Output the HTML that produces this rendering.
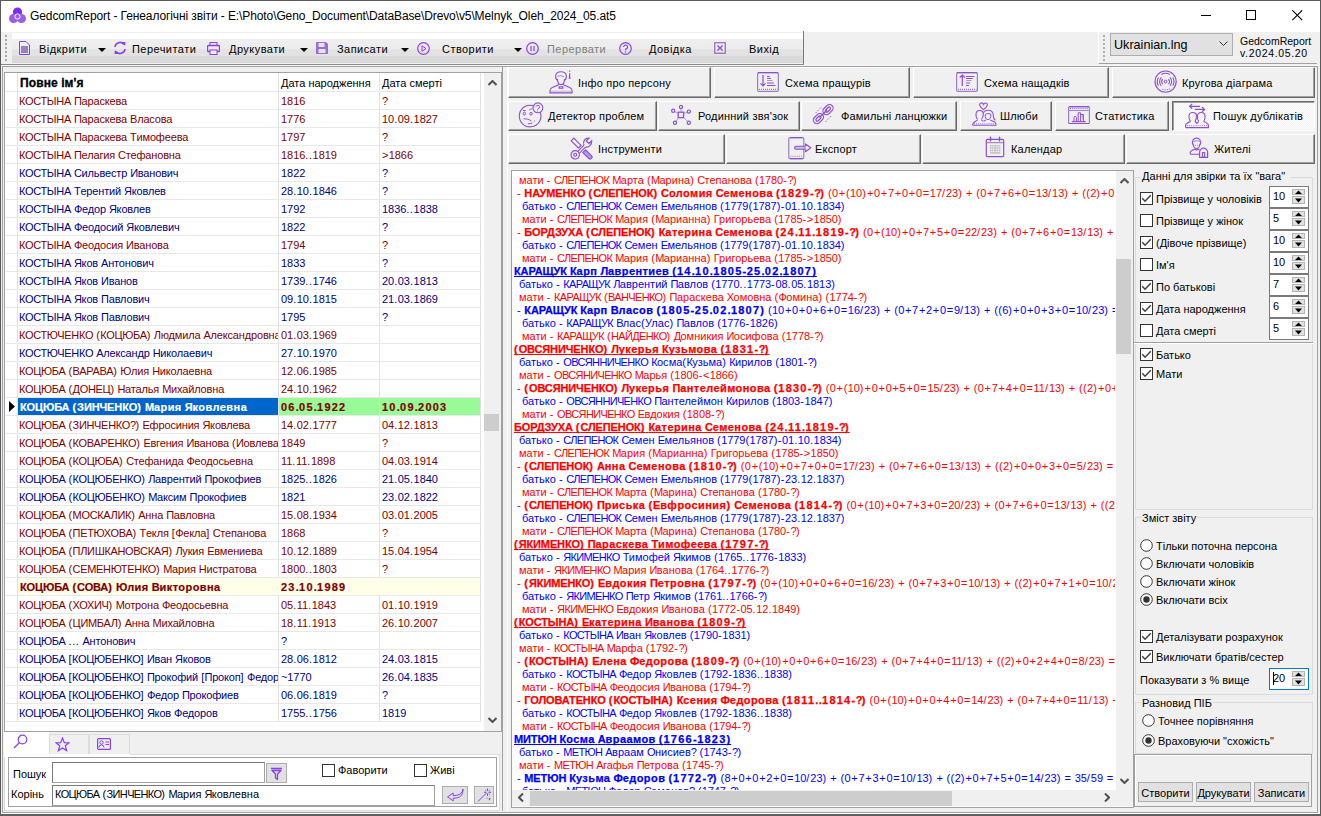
<!DOCTYPE html><html><head><meta charset="utf-8"><style>*{margin:0;padding:0}
html,body{width:1321px;height:816px;overflow:hidden;background:#f0f0f0}
body{position:relative;font-family:"Liberation Sans",sans-serif}
body div{position:absolute}
.t{white-space:pre}
.t span{position:static}
.t span span{}
</style></head><body><div style="left:0px;top:0px;width:1321px;height:816px;background:#f0f0f0"></div>
<div style="left:0px;top:0px;width:1321px;height:32px;background:#fff"></div>
<div style="left:0px;top:0px;width:1321px;height:1px;background:#5a5a5a"></div>
<div style="left:0px;top:0px;width:1px;height:816px;background:#5a5a5a"></div>
<div style="left:1320px;top:0px;width:1px;height:816px;background:#5a5a5a"></div>
<svg style="position:absolute;left:9px;top:7px" width="17" height="17" viewBox="0 0 17 17"><circle cx="8.5" cy="5" r="4.6" fill="#7a2ff0"/><circle cx="4.6" cy="11.5" r="4.6" fill="#9b5cf0"/><circle cx="12.4" cy="11.5" r="4.6" fill="#9b5cf0"/><circle cx="8.5" cy="9.5" r="2.6" fill="none" stroke="#fff" stroke-width="1"/></svg>
<div class="t" style="left:30px;top:9px;line-height:14px;font-size:12px;letter-spacing:-0.1px;color:#000">GedcomReport - Генеалогічні звіти - E:\Photo\Geno_Document\DataBase\Drevo\v5\Melnyk_Oleh_2024_05.at5</div>
<div style="left:1201px;top:15px;width:10px;height:1px;background:#000"></div>
<div style="left:1246px;top:10px;width:10px;height:10px;border:1px solid #000;box-sizing:border-box"></div>
<svg style="position:absolute;left:1292px;top:10px" width="11" height="11" viewBox="0 0 11 11"><path d="M0.3 0.3L10.2 10.2M10.2 0.3L0.3 10.2" stroke="#000" stroke-width="1.1"/></svg>
<div style="left:2px;top:32px;width:801px;height:32px;background:#f0f0f0"></div>
<div style="left:12px;top:33px;width:791px;height:6px;background:#fff"></div>
<div style="left:12px;top:39px;width:791px;height:24px;background:linear-gradient(#efefef 0%,#ececec 40%,#e3e3e3 45%,#e2e2e2 70%,#dadada 72%,#d9d9d9 100%)"></div>
<div style="left:803px;top:31px;width:1px;height:34px;background:#7a7a7a"></div>
<div style="left:5px;top:35px;width:2px;height:2px;background:#a8a8a8"></div>
<div style="left:5px;top:39px;width:2px;height:2px;background:#a8a8a8"></div>
<div style="left:5px;top:43px;width:2px;height:2px;background:#a8a8a8"></div>
<div style="left:5px;top:47px;width:2px;height:2px;background:#a8a8a8"></div>
<div style="left:5px;top:51px;width:2px;height:2px;background:#a8a8a8"></div>
<div style="left:5px;top:55px;width:2px;height:2px;background:#a8a8a8"></div>
<div style="left:5px;top:59px;width:2px;height:2px;background:#a8a8a8"></div>
<div style="left:1px;top:64px;width:803px;height:1px;background:#8a8a8a"></div>
<div style="left:1px;top:65px;width:1319px;height:1px;background:#f8f8f8"></div>
<div style="left:1098px;top:31px;width:219px;height:33px;background:#f0f0f0;border-top:1px solid #fff;border-left:1px solid #fff;border-bottom:1px solid #a0a0a0;box-sizing:border-box"></div>
<div style="left:1103px;top:35px;width:2px;height:2px;background:#b0b0b0"></div>
<div style="left:1103px;top:39px;width:2px;height:2px;background:#b0b0b0"></div>
<div style="left:1103px;top:43px;width:2px;height:2px;background:#b0b0b0"></div>
<div style="left:1103px;top:47px;width:2px;height:2px;background:#b0b0b0"></div>
<div style="left:1103px;top:51px;width:2px;height:2px;background:#b0b0b0"></div>
<div style="left:1103px;top:55px;width:2px;height:2px;background:#b0b0b0"></div>
<div style="left:1103px;top:59px;width:2px;height:2px;background:#b0b0b0"></div>
<div style="left:1110px;top:33px;width:123px;height:23px;background:#e1e1e1;border:1px solid #adadad;box-sizing:border-box"></div>
<div class="t" style="left:1114px;top:37px;line-height:16px;font-size:12.6px;color:#000">Ukrainian.lng</div>
<svg style="position:absolute;left:1219px;top:41px" width="10" height="6" viewBox="0 0 10 6"><path d="M0.5 0.5L4.5 4.5L8.5 0.5" fill="none" stroke="#333" stroke-width="1"/></svg>
<div class="t" style="left:1240px;top:35px;line-height:12px;font-size:10.5px;color:#000">GedcomReport</div>
<div class="t" style="left:1240px;top:47px;line-height:12px;font-size:10.5px;letter-spacing:0.65px;color:#000">v.2024.05.20</div>
<div class="t" style="left:39px;top:43px;line-height:13px;font-size:11px;letter-spacing:0.45px;color:#000">Відкрити</div>
<div class="t" style="left:132px;top:43px;line-height:13px;font-size:11px;letter-spacing:0.45px;color:#000">Перечитати</div>
<div class="t" style="left:229px;top:43px;line-height:13px;font-size:11px;letter-spacing:0.45px;color:#000">Друкувати</div>
<div class="t" style="left:337px;top:43px;line-height:13px;font-size:11px;letter-spacing:0.45px;color:#000">Записати</div>
<div class="t" style="left:442px;top:43px;line-height:13px;font-size:11px;letter-spacing:0.45px;color:#000">Створити</div>
<div class="t" style="left:547px;top:43px;line-height:13px;font-size:11px;letter-spacing:0.45px;color:#7f7f7f">Перервати</div>
<div class="t" style="left:649px;top:43px;line-height:13px;font-size:11px;letter-spacing:0.45px;color:#000">Довідка</div>
<div class="t" style="left:749px;top:43px;line-height:13px;font-size:11px;letter-spacing:0.45px;color:#000">Вихід</div>
<svg style="position:absolute;left:98px;top:48px" width="8" height="4" viewBox="0 0 8 4"><path d="M0 0H8L4 4Z" fill="#000"/></svg>
<svg style="position:absolute;left:300px;top:48px" width="8" height="4" viewBox="0 0 8 4"><path d="M0 0H8L4 4Z" fill="#000"/></svg>
<svg style="position:absolute;left:401px;top:48px" width="8" height="4" viewBox="0 0 8 4"><path d="M0 0H8L4 4Z" fill="#000"/></svg>
<svg style="position:absolute;left:514px;top:48px" width="8" height="4" viewBox="0 0 8 4"><path d="M0 0H8L4 4Z" fill="#000"/></svg>
<svg style="position:absolute;left:19px;top:41px" width="11" height="14" viewBox="0 0 11 14"><path d="M0.5 0.5H7L10.5 4V13.5H0.5Z" fill="none" stroke="#8a3ff0" stroke-width="1"/><rect x="2" y="5" width="7" height="7" fill="#9a7fc8"/></svg>
<svg style="position:absolute;left:113px;top:41px" width="14" height="14" viewBox="0 0 14 14"><path d="M2 6A5 5 0 0 1 11 3.5M12 8A5 5 0 0 1 3 10.5" fill="none" stroke="#8a3ff0" stroke-width="1.6"/><path d="M9 1L12.5 1L12 5Z M5 13L1.5 13L2 9Z" fill="#8a3ff0"/></svg>
<svg style="position:absolute;left:207px;top:42px" width="13" height="13" viewBox="0 0 13 13"><rect x="3" y="0.5" width="7" height="3" fill="none" stroke="#8a3ff0"/><rect x="0.5" y="3.5" width="12" height="6" rx="1" fill="none" stroke="#8a3ff0" stroke-width="1.4"/><rect x="3" y="8" width="7" height="4.5" fill="#f0f0f0" stroke="#8a3ff0"/></svg>
<svg style="position:absolute;left:316px;top:42px" width="12" height="12" viewBox="0 0 12 12"><path d="M0 0H10L12 2V12H0Z" fill="#9a6fd0"/><rect x="2.5" y="1" width="6" height="4" fill="#e8e0f5"/><rect x="2.5" y="7" width="7" height="4" fill="#e8e0f5"/></svg>
<svg style="position:absolute;left:417px;top:42px" width="13" height="13" viewBox="0 0 13 13"><circle cx="6.5" cy="6.5" r="5.8" fill="none" stroke="#8a3ff0" stroke-width="1.2"/><path d="M5 3.8L9 6.5L5 9.2Z" fill="none" stroke="#8a3ff0" stroke-width="1"/></svg>
<svg style="position:absolute;left:526px;top:42px" width="13" height="13" viewBox="0 0 13 13"><circle cx="6.5" cy="6.5" r="5.8" fill="none" stroke="#8a3ff0" stroke-width="1.2"/><path d="M5 4V9M8 4V9" stroke="#8a3ff0" stroke-width="1.2"/></svg>
<svg style="position:absolute;left:619px;top:42px" width="13" height="13" viewBox="0 0 13 13"><circle cx="6.5" cy="6.5" r="5.8" fill="none" stroke="#8a3ff0" stroke-width="1.2"/><path d="M4.6 5A2 2 0 1 1 6.5 7V8.2" fill="none" stroke="#8a3ff0" stroke-width="1.1"/><circle cx="6.5" cy="10" r="0.7" fill="#8a3ff0"/></svg>
<svg style="position:absolute;left:714px;top:42px" width="12" height="12" viewBox="0 0 12 12"><rect x="0.7" y="0.7" width="10.6" height="10.6" fill="none" stroke="#9a7fc8" stroke-width="1.4"/><path d="M3.5 3.5L8.5 8.5M8.5 3.5L3.5 8.5" stroke="#8a3ff0" stroke-width="1.1"/></svg>
<div style="left:2px;top:66px;width:1316px;height:1px;background:#a0a0a0"></div>
<div style="left:2px;top:66px;width:1px;height:748px;background:#a0a0a0"></div>
<div style="left:1317px;top:66px;width:1px;height:748px;background:#a0a0a0"></div>
<div style="left:2px;top:812px;width:1316px;height:1px;background:#a0a0a0"></div>
<div style="left:0px;top:813px;width:1321px;height:3px;background:#555"></div>
<div style="left:3px;top:67px;width:499px;height:744px;background:#f0f0f0"></div>
<div style="left:4px;top:72px;width:498px;height:660px;background:#fff;border:1px solid #a0a0a8;box-sizing:border-box"></div>
<div class="t" style="left:20px;top:75px;line-height:17px;font-size:12px;font-weight:bold;color:#000;letter-spacing:0.1px;-webkit-text-stroke:0.3px">Повне ім&#x27;я</div>
<div class="t" style="left:281px;top:75px;line-height:17px;font-size:11px;color:#000">Дата народження</div>
<div class="t" style="left:382px;top:75px;line-height:17px;font-size:11px;color:#000">Дата смерті</div>
<div style="left:17px;top:73px;width:1px;height:648px;background:#e2e2e2"></div>
<div style="left:278px;top:73px;width:1px;height:648px;background:#e2e2e2"></div>
<div style="left:379px;top:73px;width:1px;height:648px;background:#e2e2e2"></div>
<div style="left:480px;top:73px;width:1px;height:648px;background:#e2e2e2"></div>
<div style="left:6px;top:91px;width:475px;height:1px;background:#e8e8e8"></div>
<div style="left:6px;top:109px;width:475px;height:1px;background:#e8e8e8"></div>
<div style="left:6px;top:127px;width:475px;height:1px;background:#e8e8e8"></div>
<div style="left:6px;top:145px;width:475px;height:1px;background:#e8e8e8"></div>
<div style="left:6px;top:163px;width:475px;height:1px;background:#e8e8e8"></div>
<div style="left:6px;top:181px;width:475px;height:1px;background:#e8e8e8"></div>
<div style="left:6px;top:199px;width:475px;height:1px;background:#e8e8e8"></div>
<div style="left:6px;top:217px;width:475px;height:1px;background:#e8e8e8"></div>
<div style="left:6px;top:235px;width:475px;height:1px;background:#e8e8e8"></div>
<div style="left:6px;top:253px;width:475px;height:1px;background:#e8e8e8"></div>
<div style="left:6px;top:271px;width:475px;height:1px;background:#e8e8e8"></div>
<div style="left:6px;top:289px;width:475px;height:1px;background:#e8e8e8"></div>
<div style="left:6px;top:307px;width:475px;height:1px;background:#e8e8e8"></div>
<div style="left:6px;top:325px;width:475px;height:1px;background:#e8e8e8"></div>
<div style="left:6px;top:343px;width:475px;height:1px;background:#e8e8e8"></div>
<div style="left:6px;top:361px;width:475px;height:1px;background:#e8e8e8"></div>
<div style="left:6px;top:379px;width:475px;height:1px;background:#e8e8e8"></div>
<div style="left:6px;top:397px;width:475px;height:1px;background:#e8e8e8"></div>
<div style="left:6px;top:415px;width:475px;height:1px;background:#e8e8e8"></div>
<div style="left:6px;top:433px;width:475px;height:1px;background:#e8e8e8"></div>
<div style="left:6px;top:451px;width:475px;height:1px;background:#e8e8e8"></div>
<div style="left:6px;top:469px;width:475px;height:1px;background:#e8e8e8"></div>
<div style="left:6px;top:487px;width:475px;height:1px;background:#e8e8e8"></div>
<div style="left:6px;top:505px;width:475px;height:1px;background:#e8e8e8"></div>
<div style="left:6px;top:523px;width:475px;height:1px;background:#e8e8e8"></div>
<div style="left:6px;top:541px;width:475px;height:1px;background:#e8e8e8"></div>
<div style="left:6px;top:559px;width:475px;height:1px;background:#e8e8e8"></div>
<div style="left:6px;top:577px;width:475px;height:1px;background:#e8e8e8"></div>
<div style="left:6px;top:595px;width:475px;height:1px;background:#e8e8e8"></div>
<div style="left:6px;top:613px;width:475px;height:1px;background:#e8e8e8"></div>
<div style="left:6px;top:631px;width:475px;height:1px;background:#e8e8e8"></div>
<div style="left:6px;top:649px;width:475px;height:1px;background:#e8e8e8"></div>
<div style="left:6px;top:667px;width:475px;height:1px;background:#e8e8e8"></div>
<div style="left:6px;top:685px;width:475px;height:1px;background:#e8e8e8"></div>
<div style="left:6px;top:703px;width:475px;height:1px;background:#e8e8e8"></div>
<div style="left:6px;top:721px;width:475px;height:1px;background:#e8e8e8"></div>
<div class="t" style="left:19px;top:93px;width:259px;overflow:hidden;line-height:17px;font-size:11px;color:#800000"><span style="letter-spacing:-0.32px">КОСТЫНА</span><span style="letter-spacing:0.00px"> </span><span style="letter-spacing:-0.32px">П</span><span style="letter-spacing:-0.16px">араскева</span></div>
<div class="t" style="left:281px;top:93px;width:98px;overflow:hidden;line-height:17px;font-size:11px;color:#800000"><span style="letter-spacing:-0.05px">1816</span></div>
<div class="t" style="left:382px;top:93px;width:98px;overflow:hidden;line-height:17px;font-size:11px;color:#800000"><span style="letter-spacing:-0.60px">?</span></div>
<div class="t" style="left:19px;top:111px;width:259px;overflow:hidden;line-height:17px;font-size:11px;color:#800000"><span style="letter-spacing:-0.32px">КОСТЫНА</span><span style="letter-spacing:0.00px"> </span><span style="letter-spacing:-0.32px">П</span><span style="letter-spacing:-0.16px">араскева</span><span style="letter-spacing:0.00px"> </span><span style="letter-spacing:-0.32px">В</span><span style="letter-spacing:-0.16px">ласова</span></div>
<div class="t" style="left:281px;top:111px;width:98px;overflow:hidden;line-height:17px;font-size:11px;color:#800000"><span style="letter-spacing:-0.05px">1776</span></div>
<div class="t" style="left:382px;top:111px;width:98px;overflow:hidden;line-height:17px;font-size:11px;color:#800000"><span style="letter-spacing:-0.05px">10</span><span style="letter-spacing:0.60px">.</span><span style="letter-spacing:-0.05px">09</span><span style="letter-spacing:0.60px">.</span><span style="letter-spacing:-0.05px">1827</span></div>
<div class="t" style="left:19px;top:129px;width:259px;overflow:hidden;line-height:17px;font-size:11px;color:#800000"><span style="letter-spacing:-0.32px">КОСТЫНА</span><span style="letter-spacing:0.00px"> </span><span style="letter-spacing:-0.32px">П</span><span style="letter-spacing:-0.16px">араскева</span><span style="letter-spacing:0.00px"> </span><span style="letter-spacing:-0.32px">Т</span><span style="letter-spacing:-0.16px">имофеева</span></div>
<div class="t" style="left:281px;top:129px;width:98px;overflow:hidden;line-height:17px;font-size:11px;color:#800000"><span style="letter-spacing:-0.05px">1797</span></div>
<div class="t" style="left:382px;top:129px;width:98px;overflow:hidden;line-height:17px;font-size:11px;color:#800000"><span style="letter-spacing:-0.60px">?</span></div>
<div class="t" style="left:19px;top:147px;width:259px;overflow:hidden;line-height:17px;font-size:11px;color:#800000"><span style="letter-spacing:-0.32px">КОСТЫНА</span><span style="letter-spacing:0.00px"> </span><span style="letter-spacing:-0.32px">П</span><span style="letter-spacing:-0.16px">елагия</span><span style="letter-spacing:0.00px"> </span><span style="letter-spacing:-0.32px">С</span><span style="letter-spacing:-0.16px">тефановна</span></div>
<div class="t" style="left:281px;top:147px;width:98px;overflow:hidden;line-height:17px;font-size:11px;color:#800000"><span style="letter-spacing:-0.05px">1816</span><span style="letter-spacing:0.60px">..</span><span style="letter-spacing:-0.05px">1819</span></div>
<div class="t" style="left:382px;top:147px;width:98px;overflow:hidden;line-height:17px;font-size:11px;color:#800000"><span style="letter-spacing:0.30px">&gt;</span><span style="letter-spacing:-0.05px">1866</span></div>
<div class="t" style="left:19px;top:165px;width:259px;overflow:hidden;line-height:17px;font-size:11px;color:#000080"><span style="letter-spacing:-0.32px">КОСТЫНА</span><span style="letter-spacing:0.00px"> </span><span style="letter-spacing:-0.32px">С</span><span style="letter-spacing:-0.16px">ильвестр</span><span style="letter-spacing:0.00px"> </span><span style="letter-spacing:-0.32px">И</span><span style="letter-spacing:-0.16px">ванович</span></div>
<div class="t" style="left:281px;top:165px;width:98px;overflow:hidden;line-height:17px;font-size:11px;color:#000080"><span style="letter-spacing:-0.05px">1822</span></div>
<div class="t" style="left:382px;top:165px;width:98px;overflow:hidden;line-height:17px;font-size:11px;color:#000080"><span style="letter-spacing:-0.60px">?</span></div>
<div class="t" style="left:19px;top:183px;width:259px;overflow:hidden;line-height:17px;font-size:11px;color:#000080"><span style="letter-spacing:-0.32px">КОСТЫНА</span><span style="letter-spacing:0.00px"> </span><span style="letter-spacing:-0.32px">Т</span><span style="letter-spacing:-0.16px">ерентий</span><span style="letter-spacing:0.00px"> </span><span style="letter-spacing:-0.32px">Я</span><span style="letter-spacing:-0.16px">ковлев</span></div>
<div class="t" style="left:281px;top:183px;width:98px;overflow:hidden;line-height:17px;font-size:11px;color:#000080"><span style="letter-spacing:-0.05px">28</span><span style="letter-spacing:0.60px">.</span><span style="letter-spacing:-0.05px">10</span><span style="letter-spacing:0.60px">.</span><span style="letter-spacing:-0.05px">1846</span></div>
<div class="t" style="left:382px;top:183px;width:98px;overflow:hidden;line-height:17px;font-size:11px;color:#000080"><span style="letter-spacing:-0.60px">?</span></div>
<div class="t" style="left:19px;top:201px;width:259px;overflow:hidden;line-height:17px;font-size:11px;color:#000080"><span style="letter-spacing:-0.32px">КОСТЫНА</span><span style="letter-spacing:0.00px"> </span><span style="letter-spacing:-0.32px">Ф</span><span style="letter-spacing:-0.16px">едор</span><span style="letter-spacing:0.00px"> </span><span style="letter-spacing:-0.32px">Я</span><span style="letter-spacing:-0.16px">ковлев</span></div>
<div class="t" style="left:281px;top:201px;width:98px;overflow:hidden;line-height:17px;font-size:11px;color:#000080"><span style="letter-spacing:-0.05px">1792</span></div>
<div class="t" style="left:382px;top:201px;width:98px;overflow:hidden;line-height:17px;font-size:11px;color:#000080"><span style="letter-spacing:-0.05px">1836</span><span style="letter-spacing:0.60px">..</span><span style="letter-spacing:-0.05px">1838</span></div>
<div class="t" style="left:19px;top:219px;width:259px;overflow:hidden;line-height:17px;font-size:11px;color:#000080"><span style="letter-spacing:-0.32px">КОСТЫНА</span><span style="letter-spacing:0.00px"> </span><span style="letter-spacing:-0.32px">Ф</span><span style="letter-spacing:-0.16px">еодосий</span><span style="letter-spacing:0.00px"> </span><span style="letter-spacing:-0.32px">Я</span><span style="letter-spacing:-0.16px">ковлевич</span></div>
<div class="t" style="left:281px;top:219px;width:98px;overflow:hidden;line-height:17px;font-size:11px;color:#000080"><span style="letter-spacing:-0.05px">1822</span></div>
<div class="t" style="left:382px;top:219px;width:98px;overflow:hidden;line-height:17px;font-size:11px;color:#000080"><span style="letter-spacing:-0.60px">?</span></div>
<div class="t" style="left:19px;top:237px;width:259px;overflow:hidden;line-height:17px;font-size:11px;color:#800000"><span style="letter-spacing:-0.32px">КОСТЫНА</span><span style="letter-spacing:0.00px"> </span><span style="letter-spacing:-0.32px">Ф</span><span style="letter-spacing:-0.16px">еодосия</span><span style="letter-spacing:0.00px"> </span><span style="letter-spacing:-0.32px">И</span><span style="letter-spacing:-0.16px">ванова</span></div>
<div class="t" style="left:281px;top:237px;width:98px;overflow:hidden;line-height:17px;font-size:11px;color:#800000"><span style="letter-spacing:-0.05px">1794</span></div>
<div class="t" style="left:382px;top:237px;width:98px;overflow:hidden;line-height:17px;font-size:11px;color:#800000"><span style="letter-spacing:-0.60px">?</span></div>
<div class="t" style="left:19px;top:255px;width:259px;overflow:hidden;line-height:17px;font-size:11px;color:#000080"><span style="letter-spacing:-0.32px">КОСТЫНА</span><span style="letter-spacing:0.00px"> </span><span style="letter-spacing:-0.32px">Я</span><span style="letter-spacing:-0.16px">ков</span><span style="letter-spacing:0.00px"> </span><span style="letter-spacing:-0.32px">А</span><span style="letter-spacing:-0.16px">нтонович</span></div>
<div class="t" style="left:281px;top:255px;width:98px;overflow:hidden;line-height:17px;font-size:11px;color:#000080"><span style="letter-spacing:-0.05px">1833</span></div>
<div class="t" style="left:382px;top:255px;width:98px;overflow:hidden;line-height:17px;font-size:11px;color:#000080"><span style="letter-spacing:-0.60px">?</span></div>
<div class="t" style="left:19px;top:273px;width:259px;overflow:hidden;line-height:17px;font-size:11px;color:#000080"><span style="letter-spacing:-0.32px">КОСТЫНА</span><span style="letter-spacing:0.00px"> </span><span style="letter-spacing:-0.32px">Я</span><span style="letter-spacing:-0.16px">ков</span><span style="letter-spacing:0.00px"> </span><span style="letter-spacing:-0.32px">И</span><span style="letter-spacing:-0.16px">ванов</span></div>
<div class="t" style="left:281px;top:273px;width:98px;overflow:hidden;line-height:17px;font-size:11px;color:#000080"><span style="letter-spacing:-0.05px">1739</span><span style="letter-spacing:0.60px">..</span><span style="letter-spacing:-0.05px">1746</span></div>
<div class="t" style="left:382px;top:273px;width:98px;overflow:hidden;line-height:17px;font-size:11px;color:#000080"><span style="letter-spacing:-0.05px">20</span><span style="letter-spacing:0.60px">.</span><span style="letter-spacing:-0.05px">03</span><span style="letter-spacing:0.60px">.</span><span style="letter-spacing:-0.05px">1813</span></div>
<div class="t" style="left:19px;top:291px;width:259px;overflow:hidden;line-height:17px;font-size:11px;color:#000080"><span style="letter-spacing:-0.32px">КОСТЫНА</span><span style="letter-spacing:0.00px"> </span><span style="letter-spacing:-0.32px">Я</span><span style="letter-spacing:-0.16px">ков</span><span style="letter-spacing:0.00px"> </span><span style="letter-spacing:-0.32px">П</span><span style="letter-spacing:-0.16px">авлович</span></div>
<div class="t" style="left:281px;top:291px;width:98px;overflow:hidden;line-height:17px;font-size:11px;color:#000080"><span style="letter-spacing:-0.05px">09</span><span style="letter-spacing:0.60px">.</span><span style="letter-spacing:-0.05px">10</span><span style="letter-spacing:0.60px">.</span><span style="letter-spacing:-0.05px">1815</span></div>
<div class="t" style="left:382px;top:291px;width:98px;overflow:hidden;line-height:17px;font-size:11px;color:#000080"><span style="letter-spacing:-0.05px">21</span><span style="letter-spacing:0.60px">.</span><span style="letter-spacing:-0.05px">03</span><span style="letter-spacing:0.60px">.</span><span style="letter-spacing:-0.05px">1869</span></div>
<div class="t" style="left:19px;top:309px;width:259px;overflow:hidden;line-height:17px;font-size:11px;color:#000080"><span style="letter-spacing:-0.32px">КОСТЫНА</span><span style="letter-spacing:0.00px"> </span><span style="letter-spacing:-0.32px">Я</span><span style="letter-spacing:-0.16px">ков</span><span style="letter-spacing:0.00px"> </span><span style="letter-spacing:-0.32px">П</span><span style="letter-spacing:-0.16px">авлович</span></div>
<div class="t" style="left:281px;top:309px;width:98px;overflow:hidden;line-height:17px;font-size:11px;color:#000080"><span style="letter-spacing:-0.05px">1795</span></div>
<div class="t" style="left:382px;top:309px;width:98px;overflow:hidden;line-height:17px;font-size:11px;color:#000080"><span style="letter-spacing:-0.60px">?</span></div>
<div class="t" style="left:19px;top:327px;width:259px;overflow:hidden;line-height:17px;font-size:11px;color:#800000"><span style="letter-spacing:-0.32px">КОСТЮЧЕНКО</span><span style="letter-spacing:0.00px"> </span><span style="letter-spacing:0.34px">(</span><span style="letter-spacing:-0.32px">КОЦЮБА</span><span style="letter-spacing:0.34px">)</span><span style="letter-spacing:0.00px"> </span><span style="letter-spacing:-0.32px">Л</span><span style="letter-spacing:-0.16px">юдмила</span><span style="letter-spacing:0.00px"> </span><span style="letter-spacing:-0.32px">А</span><span style="letter-spacing:-0.16px">лександровна</span></div>
<div class="t" style="left:281px;top:327px;width:98px;overflow:hidden;line-height:17px;font-size:11px;color:#800000"><span style="letter-spacing:-0.05px">01</span><span style="letter-spacing:0.60px">.</span><span style="letter-spacing:-0.05px">03</span><span style="letter-spacing:0.60px">.</span><span style="letter-spacing:-0.05px">1969</span></div>
<div class="t" style="left:382px;top:327px;width:98px;overflow:hidden;line-height:17px;font-size:11px;color:#800000"></div>
<div class="t" style="left:19px;top:345px;width:259px;overflow:hidden;line-height:17px;font-size:11px;color:#000080"><span style="letter-spacing:-0.32px">КОСТЮЧЕНКО</span><span style="letter-spacing:0.00px"> </span><span style="letter-spacing:-0.32px">А</span><span style="letter-spacing:-0.16px">лександр</span><span style="letter-spacing:0.00px"> </span><span style="letter-spacing:-0.32px">Н</span><span style="letter-spacing:-0.16px">иколаевич</span></div>
<div class="t" style="left:281px;top:345px;width:98px;overflow:hidden;line-height:17px;font-size:11px;color:#000080"><span style="letter-spacing:-0.05px">27</span><span style="letter-spacing:0.60px">.</span><span style="letter-spacing:-0.05px">10</span><span style="letter-spacing:0.60px">.</span><span style="letter-spacing:-0.05px">1970</span></div>
<div class="t" style="left:382px;top:345px;width:98px;overflow:hidden;line-height:17px;font-size:11px;color:#000080"></div>
<div class="t" style="left:19px;top:363px;width:259px;overflow:hidden;line-height:17px;font-size:11px;color:#800000"><span style="letter-spacing:-0.32px">КОЦЮБА</span><span style="letter-spacing:0.00px"> </span><span style="letter-spacing:0.34px">(</span><span style="letter-spacing:-0.32px">ВАРАВА</span><span style="letter-spacing:0.34px">)</span><span style="letter-spacing:0.00px"> </span><span style="letter-spacing:-0.32px">Ю</span><span style="letter-spacing:-0.16px">лия</span><span style="letter-spacing:0.00px"> </span><span style="letter-spacing:-0.32px">Н</span><span style="letter-spacing:-0.16px">иколаевна</span></div>
<div class="t" style="left:281px;top:363px;width:98px;overflow:hidden;line-height:17px;font-size:11px;color:#800000"><span style="letter-spacing:-0.05px">12</span><span style="letter-spacing:0.60px">.</span><span style="letter-spacing:-0.05px">06</span><span style="letter-spacing:0.60px">.</span><span style="letter-spacing:-0.05px">1985</span></div>
<div class="t" style="left:382px;top:363px;width:98px;overflow:hidden;line-height:17px;font-size:11px;color:#800000"></div>
<div class="t" style="left:19px;top:381px;width:259px;overflow:hidden;line-height:17px;font-size:11px;color:#800000"><span style="letter-spacing:-0.32px">КОЦЮБА</span><span style="letter-spacing:0.00px"> </span><span style="letter-spacing:0.34px">(</span><span style="letter-spacing:-0.32px">ДОНЕЦ</span><span style="letter-spacing:0.34px">)</span><span style="letter-spacing:0.00px"> </span><span style="letter-spacing:-0.32px">Н</span><span style="letter-spacing:-0.16px">аталья</span><span style="letter-spacing:0.00px"> </span><span style="letter-spacing:-0.32px">М</span><span style="letter-spacing:-0.16px">ихайловна</span></div>
<div class="t" style="left:281px;top:381px;width:98px;overflow:hidden;line-height:17px;font-size:11px;color:#800000"><span style="letter-spacing:-0.05px">24</span><span style="letter-spacing:0.60px">.</span><span style="letter-spacing:-0.05px">10</span><span style="letter-spacing:0.60px">.</span><span style="letter-spacing:-0.05px">1962</span></div>
<div class="t" style="left:382px;top:381px;width:98px;overflow:hidden;line-height:17px;font-size:11px;color:#800000"></div>
<div style="left:18px;top:398px;width:260px;height:17px;background:#0066cc"></div>
<div style="left:279px;top:398px;width:100px;height:17px;background:#98fb98"></div>
<div style="left:380px;top:398px;width:100px;height:17px;background:#98fb98"></div>
<svg style="position:absolute;left:9px;top:401px" width="7" height="12" viewBox="0 0 7 12"><path d="M0 0L6 5.5L0 11Z" fill="#000"/></svg>
<div class="t" style="left:20px;top:399px;width:258px;overflow:hidden;line-height:17px;font-size:11px;font-weight:bold;color:#fff;-webkit-text-stroke:0.2px"><span style="letter-spacing:-0.12px">КОЦЮБА</span><span style="letter-spacing:0.00px"> </span><span style="letter-spacing:1.00px">(</span><span style="letter-spacing:-0.12px">ЗИНЧЕНКО</span><span style="letter-spacing:1.00px">)</span><span style="letter-spacing:0.00px"> </span><span style="letter-spacing:-0.12px">М</span><span style="letter-spacing:0.43px">ария</span><span style="letter-spacing:0.00px"> </span><span style="letter-spacing:-0.12px">Я</span><span style="letter-spacing:0.43px">ковлевна</span></div>
<div class="t" style="left:281px;top:399px;width:98px;overflow:hidden;line-height:17px;font-size:11px;font-weight:bold;color:#800000;-webkit-text-stroke:0.2px"><span style="letter-spacing:1.22px">06</span><span style="letter-spacing:0.30px">.</span><span style="letter-spacing:1.22px">05</span><span style="letter-spacing:0.30px">.</span><span style="letter-spacing:1.22px">1922</span></div>
<div class="t" style="left:382px;top:399px;width:98px;overflow:hidden;line-height:17px;font-size:11px;font-weight:bold;color:#800000;-webkit-text-stroke:0.2px"><span style="letter-spacing:1.22px">10</span><span style="letter-spacing:0.30px">.</span><span style="letter-spacing:1.22px">09</span><span style="letter-spacing:0.30px">.</span><span style="letter-spacing:1.22px">2003</span></div>
<div class="t" style="left:19px;top:417px;width:259px;overflow:hidden;line-height:17px;font-size:11px;color:#800000"><span style="letter-spacing:-0.32px">КОЦЮБА</span><span style="letter-spacing:0.00px"> </span><span style="letter-spacing:0.34px">(</span><span style="letter-spacing:-0.32px">ЗИНЧЕНКО</span><span style="letter-spacing:-0.60px">?</span><span style="letter-spacing:0.34px">)</span><span style="letter-spacing:0.00px"> </span><span style="letter-spacing:-0.32px">Е</span><span style="letter-spacing:-0.16px">фросиния</span><span style="letter-spacing:0.00px"> </span><span style="letter-spacing:-0.32px">Я</span><span style="letter-spacing:-0.16px">ковлева</span></div>
<div class="t" style="left:281px;top:417px;width:98px;overflow:hidden;line-height:17px;font-size:11px;color:#800000"><span style="letter-spacing:-0.05px">14</span><span style="letter-spacing:0.60px">.</span><span style="letter-spacing:-0.05px">02</span><span style="letter-spacing:0.60px">.</span><span style="letter-spacing:-0.05px">1777</span></div>
<div class="t" style="left:382px;top:417px;width:98px;overflow:hidden;line-height:17px;font-size:11px;color:#800000"><span style="letter-spacing:-0.05px">04</span><span style="letter-spacing:0.60px">.</span><span style="letter-spacing:-0.05px">12</span><span style="letter-spacing:0.60px">.</span><span style="letter-spacing:-0.05px">1813</span></div>
<div class="t" style="left:19px;top:435px;width:259px;overflow:hidden;line-height:17px;font-size:11px;color:#800000"><span style="letter-spacing:-0.32px">КОЦЮБА</span><span style="letter-spacing:0.00px"> </span><span style="letter-spacing:0.34px">(</span><span style="letter-spacing:-0.32px">КОВАРЕНКО</span><span style="letter-spacing:0.34px">)</span><span style="letter-spacing:0.00px"> </span><span style="letter-spacing:-0.32px">Е</span><span style="letter-spacing:-0.16px">вгения</span><span style="letter-spacing:0.00px"> </span><span style="letter-spacing:-0.32px">И</span><span style="letter-spacing:-0.16px">ванова</span><span style="letter-spacing:0.00px"> </span><span style="letter-spacing:0.34px">(</span><span style="letter-spacing:-0.32px">И</span><span style="letter-spacing:-0.16px">овлева</span><span style="letter-spacing:0.34px">)</span></div>
<div class="t" style="left:281px;top:435px;width:98px;overflow:hidden;line-height:17px;font-size:11px;color:#800000"><span style="letter-spacing:-0.05px">1849</span></div>
<div class="t" style="left:382px;top:435px;width:98px;overflow:hidden;line-height:17px;font-size:11px;color:#800000"><span style="letter-spacing:-0.60px">?</span></div>
<div class="t" style="left:19px;top:453px;width:259px;overflow:hidden;line-height:17px;font-size:11px;color:#800000"><span style="letter-spacing:-0.32px">КОЦЮБА</span><span style="letter-spacing:0.00px"> </span><span style="letter-spacing:0.34px">(</span><span style="letter-spacing:-0.32px">КОЦЮБА</span><span style="letter-spacing:0.34px">)</span><span style="letter-spacing:0.00px"> </span><span style="letter-spacing:-0.32px">С</span><span style="letter-spacing:-0.16px">тефанида</span><span style="letter-spacing:0.00px"> </span><span style="letter-spacing:-0.32px">Ф</span><span style="letter-spacing:-0.16px">еодосьевна</span></div>
<div class="t" style="left:281px;top:453px;width:98px;overflow:hidden;line-height:17px;font-size:11px;color:#800000"><span style="letter-spacing:-0.05px">11</span><span style="letter-spacing:0.60px">.</span><span style="letter-spacing:-0.05px">11</span><span style="letter-spacing:0.60px">.</span><span style="letter-spacing:-0.05px">1898</span></div>
<div class="t" style="left:382px;top:453px;width:98px;overflow:hidden;line-height:17px;font-size:11px;color:#800000"><span style="letter-spacing:-0.05px">04</span><span style="letter-spacing:0.60px">.</span><span style="letter-spacing:-0.05px">03</span><span style="letter-spacing:0.60px">.</span><span style="letter-spacing:-0.05px">1914</span></div>
<div class="t" style="left:19px;top:471px;width:259px;overflow:hidden;line-height:17px;font-size:11px;color:#000080"><span style="letter-spacing:-0.32px">КОЦЮБА</span><span style="letter-spacing:0.00px"> </span><span style="letter-spacing:0.34px">(</span><span style="letter-spacing:-0.32px">КОЦЮБЕНКО</span><span style="letter-spacing:0.34px">)</span><span style="letter-spacing:0.00px"> </span><span style="letter-spacing:-0.32px">Л</span><span style="letter-spacing:-0.16px">аврентий</span><span style="letter-spacing:0.00px"> </span><span style="letter-spacing:-0.32px">П</span><span style="letter-spacing:-0.16px">рокофиев</span></div>
<div class="t" style="left:281px;top:471px;width:98px;overflow:hidden;line-height:17px;font-size:11px;color:#000080"><span style="letter-spacing:-0.05px">1825</span><span style="letter-spacing:0.60px">..</span><span style="letter-spacing:-0.05px">1826</span></div>
<div class="t" style="left:382px;top:471px;width:98px;overflow:hidden;line-height:17px;font-size:11px;color:#000080"><span style="letter-spacing:-0.05px">21</span><span style="letter-spacing:0.60px">.</span><span style="letter-spacing:-0.05px">05</span><span style="letter-spacing:0.60px">.</span><span style="letter-spacing:-0.05px">1840</span></div>
<div class="t" style="left:19px;top:489px;width:259px;overflow:hidden;line-height:17px;font-size:11px;color:#000080"><span style="letter-spacing:-0.32px">КОЦЮБА</span><span style="letter-spacing:0.00px"> </span><span style="letter-spacing:0.34px">(</span><span style="letter-spacing:-0.32px">КОЦЮБЕНКО</span><span style="letter-spacing:0.34px">)</span><span style="letter-spacing:0.00px"> </span><span style="letter-spacing:-0.32px">М</span><span style="letter-spacing:-0.16px">аксим</span><span style="letter-spacing:0.00px"> </span><span style="letter-spacing:-0.32px">П</span><span style="letter-spacing:-0.16px">рокофиев</span></div>
<div class="t" style="left:281px;top:489px;width:98px;overflow:hidden;line-height:17px;font-size:11px;color:#000080"><span style="letter-spacing:-0.05px">1821</span></div>
<div class="t" style="left:382px;top:489px;width:98px;overflow:hidden;line-height:17px;font-size:11px;color:#000080"><span style="letter-spacing:-0.05px">23</span><span style="letter-spacing:0.60px">.</span><span style="letter-spacing:-0.05px">02</span><span style="letter-spacing:0.60px">.</span><span style="letter-spacing:-0.05px">1822</span></div>
<div class="t" style="left:19px;top:507px;width:259px;overflow:hidden;line-height:17px;font-size:11px;color:#800000"><span style="letter-spacing:-0.32px">КОЦЮБА</span><span style="letter-spacing:0.00px"> </span><span style="letter-spacing:0.34px">(</span><span style="letter-spacing:-0.32px">МОСКАЛИК</span><span style="letter-spacing:0.34px">)</span><span style="letter-spacing:0.00px"> </span><span style="letter-spacing:-0.32px">А</span><span style="letter-spacing:-0.16px">нна</span><span style="letter-spacing:0.00px"> </span><span style="letter-spacing:-0.32px">П</span><span style="letter-spacing:-0.16px">авловна</span></div>
<div class="t" style="left:281px;top:507px;width:98px;overflow:hidden;line-height:17px;font-size:11px;color:#800000"><span style="letter-spacing:-0.05px">15</span><span style="letter-spacing:0.60px">.</span><span style="letter-spacing:-0.05px">08</span><span style="letter-spacing:0.60px">.</span><span style="letter-spacing:-0.05px">1934</span></div>
<div class="t" style="left:382px;top:507px;width:98px;overflow:hidden;line-height:17px;font-size:11px;color:#800000"><span style="letter-spacing:-0.05px">03</span><span style="letter-spacing:0.60px">.</span><span style="letter-spacing:-0.05px">01</span><span style="letter-spacing:0.60px">.</span><span style="letter-spacing:-0.05px">2005</span></div>
<div class="t" style="left:19px;top:525px;width:259px;overflow:hidden;line-height:17px;font-size:11px;color:#800000"><span style="letter-spacing:-0.32px">КОЦЮБА</span><span style="letter-spacing:0.00px"> </span><span style="letter-spacing:0.34px">(</span><span style="letter-spacing:-0.32px">ПЕТЮХОВА</span><span style="letter-spacing:0.34px">)</span><span style="letter-spacing:0.00px"> </span><span style="letter-spacing:-0.32px">Т</span><span style="letter-spacing:-0.16px">екля</span><span style="letter-spacing:0.00px"> </span><span style="letter-spacing:0.34px">[</span><span style="letter-spacing:-0.32px">Ф</span><span style="letter-spacing:-0.16px">екла</span><span style="letter-spacing:0.34px">]</span><span style="letter-spacing:0.00px"> </span><span style="letter-spacing:-0.32px">С</span><span style="letter-spacing:-0.16px">тепанова</span></div>
<div class="t" style="left:281px;top:525px;width:98px;overflow:hidden;line-height:17px;font-size:11px;color:#800000"><span style="letter-spacing:-0.05px">1868</span></div>
<div class="t" style="left:382px;top:525px;width:98px;overflow:hidden;line-height:17px;font-size:11px;color:#800000"><span style="letter-spacing:-0.60px">?</span></div>
<div class="t" style="left:19px;top:543px;width:259px;overflow:hidden;line-height:17px;font-size:11px;color:#800000"><span style="letter-spacing:-0.32px">КОЦЮБА</span><span style="letter-spacing:0.00px"> </span><span style="letter-spacing:0.34px">(</span><span style="letter-spacing:-0.32px">ПЛИШКАНОВСКАЯ</span><span style="letter-spacing:0.34px">)</span><span style="letter-spacing:0.00px"> </span><span style="letter-spacing:-0.32px">Л</span><span style="letter-spacing:-0.16px">укия</span><span style="letter-spacing:0.00px"> </span><span style="letter-spacing:-0.32px">Е</span><span style="letter-spacing:-0.16px">вмениева</span></div>
<div class="t" style="left:281px;top:543px;width:98px;overflow:hidden;line-height:17px;font-size:11px;color:#800000"><span style="letter-spacing:-0.05px">10</span><span style="letter-spacing:0.60px">.</span><span style="letter-spacing:-0.05px">12</span><span style="letter-spacing:0.60px">.</span><span style="letter-spacing:-0.05px">1889</span></div>
<div class="t" style="left:382px;top:543px;width:98px;overflow:hidden;line-height:17px;font-size:11px;color:#800000"><span style="letter-spacing:-0.05px">15</span><span style="letter-spacing:0.60px">.</span><span style="letter-spacing:-0.05px">04</span><span style="letter-spacing:0.60px">.</span><span style="letter-spacing:-0.05px">1954</span></div>
<div class="t" style="left:19px;top:561px;width:259px;overflow:hidden;line-height:17px;font-size:11px;color:#800000"><span style="letter-spacing:-0.32px">КОЦЮБА</span><span style="letter-spacing:0.00px"> </span><span style="letter-spacing:0.34px">(</span><span style="letter-spacing:-0.32px">СЕМЕНЮТЕНКО</span><span style="letter-spacing:0.34px">)</span><span style="letter-spacing:0.00px"> </span><span style="letter-spacing:-0.32px">М</span><span style="letter-spacing:-0.16px">ария</span><span style="letter-spacing:0.00px"> </span><span style="letter-spacing:-0.32px">Н</span><span style="letter-spacing:-0.16px">истратова</span></div>
<div class="t" style="left:281px;top:561px;width:98px;overflow:hidden;line-height:17px;font-size:11px;color:#800000"><span style="letter-spacing:-0.05px">1800</span><span style="letter-spacing:0.60px">..</span><span style="letter-spacing:-0.05px">1803</span></div>
<div class="t" style="left:382px;top:561px;width:98px;overflow:hidden;line-height:17px;font-size:11px;color:#800000"><span style="letter-spacing:-0.60px">?</span></div>
<div style="left:18px;top:578px;width:462px;height:17px;background:#ffffe8"></div>
<div class="t" style="left:20px;top:579px;width:258px;overflow:hidden;line-height:17px;font-size:11px;font-weight:bold;color:#800000;-webkit-text-stroke:0.2px"><span style="letter-spacing:-0.12px">КОЦЮБА</span><span style="letter-spacing:0.00px"> </span><span style="letter-spacing:1.00px">(</span><span style="letter-spacing:-0.12px">СОВА</span><span style="letter-spacing:1.00px">)</span><span style="letter-spacing:0.00px"> </span><span style="letter-spacing:-0.12px">Ю</span><span style="letter-spacing:0.43px">лия</span><span style="letter-spacing:0.00px"> </span><span style="letter-spacing:-0.12px">В</span><span style="letter-spacing:0.43px">икторовна</span></div>
<div class="t" style="left:281px;top:579px;width:98px;overflow:hidden;line-height:17px;font-size:11px;font-weight:bold;color:#800000;-webkit-text-stroke:0.2px"><span style="letter-spacing:1.22px">23</span><span style="letter-spacing:0.30px">.</span><span style="letter-spacing:1.22px">10</span><span style="letter-spacing:0.30px">.</span><span style="letter-spacing:1.22px">1989</span></div>
<div class="t" style="left:382px;top:579px;width:98px;overflow:hidden;line-height:17px;font-size:11px;font-weight:bold;color:#800000;-webkit-text-stroke:0.2px"></div>
<div class="t" style="left:19px;top:597px;width:259px;overflow:hidden;line-height:17px;font-size:11px;color:#800000"><span style="letter-spacing:-0.32px">КОЦЮБА</span><span style="letter-spacing:0.00px"> </span><span style="letter-spacing:0.34px">(</span><span style="letter-spacing:-0.32px">ХОХИЧ</span><span style="letter-spacing:0.34px">)</span><span style="letter-spacing:0.00px"> </span><span style="letter-spacing:-0.32px">М</span><span style="letter-spacing:-0.16px">отрона</span><span style="letter-spacing:0.00px"> </span><span style="letter-spacing:-0.32px">Ф</span><span style="letter-spacing:-0.16px">еодосьевна</span></div>
<div class="t" style="left:281px;top:597px;width:98px;overflow:hidden;line-height:17px;font-size:11px;color:#800000"><span style="letter-spacing:-0.05px">05</span><span style="letter-spacing:0.60px">.</span><span style="letter-spacing:-0.05px">11</span><span style="letter-spacing:0.60px">.</span><span style="letter-spacing:-0.05px">1843</span></div>
<div class="t" style="left:382px;top:597px;width:98px;overflow:hidden;line-height:17px;font-size:11px;color:#800000"><span style="letter-spacing:-0.05px">01</span><span style="letter-spacing:0.60px">.</span><span style="letter-spacing:-0.05px">10</span><span style="letter-spacing:0.60px">.</span><span style="letter-spacing:-0.05px">1919</span></div>
<div class="t" style="left:19px;top:615px;width:259px;overflow:hidden;line-height:17px;font-size:11px;color:#800000"><span style="letter-spacing:-0.32px">КОЦЮБА</span><span style="letter-spacing:0.00px"> </span><span style="letter-spacing:0.34px">(</span><span style="letter-spacing:-0.32px">ЦИМБАЛ</span><span style="letter-spacing:0.34px">)</span><span style="letter-spacing:0.00px"> </span><span style="letter-spacing:-0.32px">А</span><span style="letter-spacing:-0.16px">нна</span><span style="letter-spacing:0.00px"> </span><span style="letter-spacing:-0.32px">М</span><span style="letter-spacing:-0.16px">ихайловна</span></div>
<div class="t" style="left:281px;top:615px;width:98px;overflow:hidden;line-height:17px;font-size:11px;color:#800000"><span style="letter-spacing:-0.05px">18</span><span style="letter-spacing:0.60px">.</span><span style="letter-spacing:-0.05px">11</span><span style="letter-spacing:0.60px">.</span><span style="letter-spacing:-0.05px">1913</span></div>
<div class="t" style="left:382px;top:615px;width:98px;overflow:hidden;line-height:17px;font-size:11px;color:#800000"><span style="letter-spacing:-0.05px">26</span><span style="letter-spacing:0.60px">.</span><span style="letter-spacing:-0.05px">10</span><span style="letter-spacing:0.60px">.</span><span style="letter-spacing:-0.05px">2007</span></div>
<div class="t" style="left:19px;top:633px;width:259px;overflow:hidden;line-height:17px;font-size:11px;color:#000080"><span style="letter-spacing:-0.32px">КОЦЮБА</span><span style="letter-spacing:0.00px"> </span><span style="letter-spacing:0.60px">...</span><span style="letter-spacing:0.00px"> </span><span style="letter-spacing:-0.32px">А</span><span style="letter-spacing:-0.16px">нтонович</span></div>
<div class="t" style="left:281px;top:633px;width:98px;overflow:hidden;line-height:17px;font-size:11px;color:#000080"><span style="letter-spacing:-0.60px">?</span></div>
<div class="t" style="left:382px;top:633px;width:98px;overflow:hidden;line-height:17px;font-size:11px;color:#000080"></div>
<div class="t" style="left:19px;top:651px;width:259px;overflow:hidden;line-height:17px;font-size:11px;color:#000080"><span style="letter-spacing:-0.32px">КОЦЮБА</span><span style="letter-spacing:0.00px"> </span><span style="letter-spacing:0.34px">[</span><span style="letter-spacing:-0.32px">КОЦЮБЕНКО</span><span style="letter-spacing:0.34px">]</span><span style="letter-spacing:0.00px"> </span><span style="letter-spacing:-0.32px">И</span><span style="letter-spacing:-0.16px">ван</span><span style="letter-spacing:0.00px"> </span><span style="letter-spacing:-0.32px">Я</span><span style="letter-spacing:-0.16px">ковов</span></div>
<div class="t" style="left:281px;top:651px;width:98px;overflow:hidden;line-height:17px;font-size:11px;color:#000080"><span style="letter-spacing:-0.05px">28</span><span style="letter-spacing:0.60px">.</span><span style="letter-spacing:-0.05px">06</span><span style="letter-spacing:0.60px">.</span><span style="letter-spacing:-0.05px">1812</span></div>
<div class="t" style="left:382px;top:651px;width:98px;overflow:hidden;line-height:17px;font-size:11px;color:#000080"><span style="letter-spacing:-0.05px">24</span><span style="letter-spacing:0.60px">.</span><span style="letter-spacing:-0.05px">03</span><span style="letter-spacing:0.60px">.</span><span style="letter-spacing:-0.05px">1815</span></div>
<div class="t" style="left:19px;top:669px;width:259px;overflow:hidden;line-height:17px;font-size:11px;color:#000080"><span style="letter-spacing:-0.32px">КОЦЮБА</span><span style="letter-spacing:0.00px"> </span><span style="letter-spacing:0.34px">[</span><span style="letter-spacing:-0.32px">КОЦЮБЕНКО</span><span style="letter-spacing:0.34px">]</span><span style="letter-spacing:0.00px"> </span><span style="letter-spacing:-0.32px">П</span><span style="letter-spacing:-0.16px">рокофий</span><span style="letter-spacing:0.00px"> </span><span style="letter-spacing:0.34px">[</span><span style="letter-spacing:-0.32px">П</span><span style="letter-spacing:-0.16px">рокоп</span><span style="letter-spacing:0.34px">]</span><span style="letter-spacing:0.00px"> </span><span style="letter-spacing:-0.32px">Ф</span><span style="letter-spacing:-0.16px">едоров</span></div>
<div class="t" style="left:281px;top:669px;width:98px;overflow:hidden;line-height:17px;font-size:11px;color:#000080"><span style="letter-spacing:-0.16px">~</span><span style="letter-spacing:-0.05px">1770</span></div>
<div class="t" style="left:382px;top:669px;width:98px;overflow:hidden;line-height:17px;font-size:11px;color:#000080"><span style="letter-spacing:-0.05px">26</span><span style="letter-spacing:0.60px">.</span><span style="letter-spacing:-0.05px">04</span><span style="letter-spacing:0.60px">.</span><span style="letter-spacing:-0.05px">1835</span></div>
<div class="t" style="left:19px;top:687px;width:259px;overflow:hidden;line-height:17px;font-size:11px;color:#000080"><span style="letter-spacing:-0.32px">КОЦЮБА</span><span style="letter-spacing:0.00px"> </span><span style="letter-spacing:0.34px">[</span><span style="letter-spacing:-0.32px">КОЦЮБЕНКО</span><span style="letter-spacing:0.34px">]</span><span style="letter-spacing:0.00px"> </span><span style="letter-spacing:-0.32px">Ф</span><span style="letter-spacing:-0.16px">едор</span><span style="letter-spacing:0.00px"> </span><span style="letter-spacing:-0.32px">П</span><span style="letter-spacing:-0.16px">рокофиев</span></div>
<div class="t" style="left:281px;top:687px;width:98px;overflow:hidden;line-height:17px;font-size:11px;color:#000080"><span style="letter-spacing:-0.05px">06</span><span style="letter-spacing:0.60px">.</span><span style="letter-spacing:-0.05px">06</span><span style="letter-spacing:0.60px">.</span><span style="letter-spacing:-0.05px">1819</span></div>
<div class="t" style="left:382px;top:687px;width:98px;overflow:hidden;line-height:17px;font-size:11px;color:#000080"><span style="letter-spacing:-0.60px">?</span></div>
<div class="t" style="left:19px;top:705px;width:259px;overflow:hidden;line-height:17px;font-size:11px;color:#000080"><span style="letter-spacing:-0.32px">КОЦЮБА</span><span style="letter-spacing:0.00px"> </span><span style="letter-spacing:0.34px">[</span><span style="letter-spacing:-0.32px">КОЦЮБЕНКО</span><span style="letter-spacing:0.34px">]</span><span style="letter-spacing:0.00px"> </span><span style="letter-spacing:-0.32px">Я</span><span style="letter-spacing:-0.16px">ков</span><span style="letter-spacing:0.00px"> </span><span style="letter-spacing:-0.32px">Ф</span><span style="letter-spacing:-0.16px">едоров</span></div>
<div class="t" style="left:281px;top:705px;width:98px;overflow:hidden;line-height:17px;font-size:11px;color:#000080"><span style="letter-spacing:-0.05px">1755</span><span style="letter-spacing:0.60px">..</span><span style="letter-spacing:-0.05px">1756</span></div>
<div class="t" style="left:382px;top:705px;width:98px;overflow:hidden;line-height:17px;font-size:11px;color:#000080"><span style="letter-spacing:-0.05px">1819</span></div>
<div style="left:484px;top:73px;width:17px;height:658px;background:#f0f0f0"></div>
<svg style="position:absolute;left:488px;top:80px" width="9" height="6" viewBox="0 0 9 6"><path d="M0.5 5L4.5 1L8.5 5" fill="none" stroke="#505050" stroke-width="2"/></svg>
<svg style="position:absolute;left:488px;top:717px" width="9" height="6" viewBox="0 0 9 6"><path d="M0.5 1L4.5 5L8.5 1" fill="none" stroke="#505050" stroke-width="2"/></svg>
<div style="left:484px;top:414px;width:15px;height:17px;background:#cdcdcd"></div>
<div style="left:4px;top:732px;width:498px;height:23px;background:#f0f0f0"></div>
<div style="left:4px;top:754px;width:496px;height:57px;background:#fff;border:1px solid #dcdcdc;border-top:none;box-sizing:border-box"></div>
<div style="left:4px;top:732px;width:45px;height:25px;background:#fff"></div>
<div style="left:49px;top:734px;width:40px;height:20px;background:#f0f0f0;border:1px solid #dcdcdc;border-bottom:none;box-sizing:border-box"></div>
<div style="left:89px;top:734px;width:41px;height:20px;background:#f0f0f0;border:1px solid #dcdcdc;border-bottom:none;box-sizing:border-box"></div>
<div style="left:130px;top:754px;width:370px;height:1px;background:#dcdcdc"></div>
<svg style="position:absolute;left:13px;top:734px" width="15" height="15" viewBox="0 0 15 15"><circle cx="9.5" cy="5.5" r="4.3" fill="none" stroke="#8a3ff0" stroke-width="1.2"/><path d="M6.5 8.5L1 14" stroke="#8a3ff0" stroke-width="1.2"/></svg>
<svg style="position:absolute;left:55px;top:737px" width="15" height="15" viewBox="0 0 15 15"><path d="M7.5 1L9.3 5.6L14 5.8L10.3 8.8L11.6 13.6L7.5 10.9L3.4 13.6L4.7 8.8L1 5.8L5.7 5.6Z" fill="none" stroke="#8a3ff0" stroke-width="1.2"/></svg>
<svg style="position:absolute;left:97px;top:738px" width="14" height="12" viewBox="0 0 14 12"><rect x="0.6" y="0.6" width="12.8" height="10.8" rx="1" fill="none" stroke="#8a3ff0" stroke-width="1.2"/><circle cx="4.5" cy="4.5" r="1.7" fill="none" stroke="#8a3ff0"/><path d="M2 9.5A2.5 2.5 0 0 1 7 9.5M8.5 4H12M8.5 6.5H12" fill="none" stroke="#8a3ff0"/></svg>
<div style="left:8px;top:757px;width:489px;height:50px;border:1px solid #a0a0a0;box-sizing:border-box;background:#fff"></div>
<div class="t" style="left:13px;top:768px;line-height:13px;font-size:11px;color:#000">Пошук</div>
<div class="t" style="left:11px;top:788px;line-height:13px;font-size:11px;color:#000">Корінь</div>
<div style="left:52px;top:762px;width:213px;height:21px;background:#fff;border:1px solid #7a7a7a;border-right-color:#a0a0a0;border-bottom-color:#a0a0a0;box-sizing:border-box"></div>
<div style="left:266px;top:763px;width:21px;height:20px;background:#e1e1e1;border:1px solid #adadad;box-sizing:border-box"></div>
<svg style="position:absolute;left:270px;top:767px" width="13" height="14" viewBox="0 0 13 14"><path d="M1 1.5H12M2 3.5H11L7.5 7V12.5L5.5 11V7Z" fill="none" stroke="#8a3ff0" stroke-width="1.3" stroke-linejoin="round"/></svg>
<div style="left:322px;top:764px;width:13px;height:13px;background:#fff;border:1px solid #333;box-sizing:border-box"></div>
<div class="t" style="left:338px;top:764px;line-height:13px;font-size:11px;color:#000">Фаворити</div>
<div style="left:414px;top:764px;width:13px;height:13px;background:#fff;border:1px solid #333;box-sizing:border-box"></div>
<div class="t" style="left:430px;top:764px;line-height:13px;font-size:11px;color:#000">Живі</div>
<div style="left:52px;top:785px;width:383px;height:21px;background:#fff;border:1px solid #7a7a7a;border-right-color:#a0a0a0;border-bottom-color:#a0a0a0;box-sizing:border-box"></div>
<div class="t" style="left:55px;top:788px;line-height:13px;font-size:11px;color:#000"><span style="letter-spacing:-0.65px">КОЦЮБА</span><span style="letter-spacing:0.00px"> </span><span style="letter-spacing:0.34px">(</span><span style="letter-spacing:-0.65px">ЗИНЧЕНКО</span><span style="letter-spacing:0.34px">)</span><span style="letter-spacing:0.00px"> </span><span style="letter-spacing:-0.65px">М</span><span style="letter-spacing:0.02px">ария</span><span style="letter-spacing:0.00px"> </span><span style="letter-spacing:-0.65px">Я</span><span style="letter-spacing:0.02px">ковлевна</span></div>
<div style="left:442px;top:786px;width:26px;height:18px;background:#e1e1e1;border:1px solid #adadad;box-sizing:border-box"></div>
<svg style="position:absolute;left:446px;top:788px" width="19" height="14" viewBox="0 0 19 14"><path d="M17 1C16.6 4.5 14.5 6.8 10.5 7.3L7.2 7.6V5L1.5 8.9L7.2 12.8V10.2L10.8 9.9C15 9.4 17.2 6 17 1Z" fill="none" stroke="#8a3ff0" stroke-width="1"/></svg>
<div style="left:474px;top:786px;width:20px;height:18px;background:#e1e1e1;border:1px solid #adadad;box-sizing:border-box"></div>
<svg style="position:absolute;left:477px;top:788px" width="15" height="15" viewBox="0 0 15 15"><path d="M1 13.5L9.5 5" stroke="#8a3ff0" stroke-width="1"/><path d="M10.5 0.5V3M10.5 5.5V8M7 4.3H9.5M11.5 4.3H14M8.2 2L9.3 3.1M12.8 2L11.7 3.1M12.8 6.6L11.7 5.5" stroke="#8a3ff0" stroke-width="1"/><path d="M12.5 9.5L13.5 11L12.5 12.5L11.5 11Z" fill="#8a3ff0"/><circle cx="10" cy="10" r="0.6" fill="#8a3ff0"/></svg>
<div style="left:502px;top:67px;width:1px;height:744px;background:#a0a0a0"></div>
<div style="left:503px;top:67px;width:4px;height:744px;background:#f0f0f0"></div>
<div style="left:507px;top:67px;width:1px;height:744px;background:#fff"></div>
<div style="left:508px;top:67px;width:203px;height:31px;background:#f0f0f0;border-top:1px solid #fff;border-left:1px solid #fff;border-right:1px solid #696969;border-bottom:1px solid #696969;box-shadow:inset -1px -1px 0 #a0a0a0;box-sizing:border-box"></div>
<svg style="position:absolute;left:549px;top:70px" width="24" height="24" viewBox="0 0 24 24"><g fill="none" stroke="#8c4fd6" stroke-width="1.1"><path d="M8.3 10.2C6.9 9.2 6.4 7.5 6.7 5.5C7.2 2.8 9.5 1.8 12 1.8C14.5 1.8 16.8 3 17.3 5.5C17.6 7.5 17.1 9.2 15.7 10.2"/><path d="M8.5 9C8.5 12.3 10 14.6 12 14.6C14 14.6 15.5 12.3 15.5 9"/><path d="M9.5 13.6L9.1 15.1L3.2 17.6C1.6 18.3 0.9 19.6 0.9 21.5V22.9H23.1V21.5C23.1 19.6 22.4 18.3 20.8 17.6L14.9 15.1L14.5 13.6"/></g><path d="M8.6 6.4C10.2 5.6 12.6 5.7 14.9 6.8" fill="none" stroke="#a890d0" stroke-width="1.1"/><rect x="9.6" y="16.3" width="4.8" height="2.5" fill="#8c4fd6"/><rect x="11" y="17" width="2" height="1.1" fill="#c0a8e8"/><path d="M2.6 21.2H21.4" stroke="#8c4fd6" stroke-dasharray="0.8 1.2"/><path d="M20.6 0.6V1.8M20.6 3.2V8.2M19.6 8.2H21.6" stroke="#8c4fd6" stroke-width="1.2"/></svg>
<div class="t" style="left:578px;top:77px;line-height:13px;font-size:11px;letter-spacing:0.18px;color:#000">Інфо про персону</div>
<div style="left:714px;top:67px;width:196px;height:31px;background:#f0f0f0;border-top:1px solid #fff;border-left:1px solid #fff;border-right:1px solid #696969;border-bottom:1px solid #696969;box-shadow:inset -1px -1px 0 #a0a0a0;box-sizing:border-box"></div>
<svg style="position:absolute;left:757px;top:72px" width="22" height="20" viewBox="0 0 22 20"><rect x="0.6" y="0.6" width="20.8" height="18.8" rx="1.2" fill="none" stroke="#9a7fc8" stroke-width="1.2"/><path d="M1 0.6H21" stroke="#8c4fd6" stroke-width="1.2"/><path d="M6 3V13.8M3.5 11.3L6 13.8L8.5 11.3" fill="none" stroke="#8c4fd6" stroke-width="1.2"/><path d="M10 4.4H12.8M10 6.4H14M10 11H16.8M10 13.5H18.5" stroke="#8c4fd6" stroke-width="1"/><path d="M10 8.5H15.6" stroke="#a890d0" stroke-width="1"/><path d="M2 17.3H20.5" stroke="#8c4fd6" stroke-dasharray="1 1"/></svg>
<div class="t" style="left:785px;top:77px;line-height:13px;font-size:11px;letter-spacing:0.18px;color:#000">Схема пращурів</div>
<div style="left:913px;top:67px;width:196px;height:31px;background:#f0f0f0;border-top:1px solid #fff;border-left:1px solid #fff;border-right:1px solid #696969;border-bottom:1px solid #696969;box-shadow:inset -1px -1px 0 #a0a0a0;box-sizing:border-box"></div>
<svg style="position:absolute;left:956px;top:72px" width="22" height="20" viewBox="0 0 22 20"><rect x="0.6" y="0.6" width="20.8" height="18.8" rx="1.2" fill="none" stroke="#9a7fc8" stroke-width="1.2"/><path d="M1 0.6H21" stroke="#8c4fd6" stroke-width="1.2"/><path d="M6.3 14V3M3.8 5.5L6.3 3L8.8 5.5" fill="none" stroke="#8c4fd6" stroke-width="1.2"/><path d="M10 4.5H18.5M10 6.5H16.8M10 11H14M10 13.5H13" stroke="#8c4fd6" stroke-width="1"/><path d="M10 8.6H15.5" stroke="#a890d0" stroke-width="1"/><path d="M2 17.3H20.5" stroke="#8c4fd6" stroke-dasharray="1 1"/></svg>
<div class="t" style="left:984px;top:77px;line-height:13px;font-size:11px;letter-spacing:0.18px;color:#000">Схема нащадків</div>
<div style="left:1112px;top:67px;width:203px;height:31px;background:#f0f0f0;border-top:1px solid #fff;border-left:1px solid #fff;border-right:1px solid #696969;border-bottom:1px solid #696969;box-shadow:inset -1px -1px 0 #a0a0a0;box-sizing:border-box"></div>
<svg style="position:absolute;left:1154px;top:70px" width="23" height="23" viewBox="0 0 23 23"><circle cx="11.6" cy="11.6" r="10.6" fill="none" stroke="#8c4fd6" stroke-width="1.1"/><path d="M7.45 4.41A8.3 8.3 0 0 1 15.75 4.41M4.41 7.45A8.3 8.3 0 0 0 4.41 15.75M18.79 7.45A8.3 8.3 0 0 1 18.79 15.75M7.36 7.36A6 6 0 0 0 7.36 15.84M15.84 7.36A6 6 0 0 1 15.84 15.84M8.69 9.16A3.8 3.8 0 0 0 8.69 14.04M14.51 9.16A3.8 3.8 0 0 1 14.51 14.04" fill="none" stroke="#8c4fd6" stroke-width="1.1"/><path d="M15.75 18.79A8.3 8.3 0 0 1 7.45 18.79" fill="none" stroke="#8c4fd6" stroke-width="1.1" stroke-dasharray="0.9 1.3"/><circle cx="11.6" cy="11.6" r="1.4" fill="none" stroke="#8c4fd6" stroke-width="1"/></svg>
<div class="t" style="left:1182px;top:77px;line-height:13px;font-size:11px;letter-spacing:0.18px;color:#000">Кругова діаграма</div>
<div style="left:508px;top:101px;width:149px;height:30px;background:#f0f0f0;border-top:1px solid #fff;border-left:1px solid #fff;border-right:1px solid #696969;border-bottom:1px solid #696969;box-shadow:inset -1px -1px 0 #a0a0a0;box-sizing:border-box"></div>
<svg style="position:absolute;left:518px;top:102px" width="26" height="26" viewBox="0 0 26 26"><path d="M16.5 4.2A10.8 10.8 0 1 0 22.2 10.2" fill="none" stroke="#8c4fd6" stroke-width="1.1"/><circle cx="19.9" cy="5.8" r="4.9" fill="none" stroke="#8c4fd6" stroke-width="1.1"/><path d="M18.2 4.6A1.7 1.7 0 1 1 20.2 6.6L19.6 7.8" fill="none" stroke="#8c4fd6" stroke-width="1"/><circle cx="19.5" cy="9" r="0.6" fill="#8c4fd6"/><ellipse cx="6.3" cy="11.6" rx="1.1" ry="1.6" fill="none" stroke="#8c4fd6"/><circle cx="13" cy="11.7" r="1.3" fill="none" stroke="#8c4fd6"/><path d="M4.8 8.5H7.8M11 8.2C12 7.3 13.2 6.8 14.3 6.8" fill="none" stroke="#8c4fd6" stroke-width="0.9"/><path d="M5.5 16.8C8.5 16.8 11 17.3 13.5 19M9.8 21.8C11.5 21.8 13 21.5 14.3 21M16 19.5L16.8 18.8" fill="none" stroke="#8c4fd6" stroke-width="1"/></svg>
<div class="t" style="left:548px;top:110px;line-height:13px;font-size:11px;letter-spacing:0.18px;color:#000">Детектор проблем</div>
<div style="left:658px;top:101px;width:142px;height:30px;background:#f0f0f0;border-top:1px solid #fff;border-left:1px solid #fff;border-right:1px solid #696969;border-bottom:1px solid #696969;box-shadow:inset -1px -1px 0 #a0a0a0;box-sizing:border-box"></div>
<svg style="position:absolute;left:670px;top:105px" width="21" height="21" viewBox="0 0 21 21"><rect x="8.2" y="7.2" width="5.4" height="5.4" fill="none" stroke="#8c4fd6" stroke-width="1.3"/><g fill="none" stroke="#8c4fd6" stroke-width="1.2"><circle cx="11" cy="2" r="1.6"/><circle cx="3.2" cy="5.8" r="1.6"/><circle cx="18.8" cy="6.6" r="1.6"/><circle cx="5" cy="17.8" r="1.6"/><circle cx="18.8" cy="17.8" r="1.6"/></g><path d="M11 3.6V7.2M4.7 6.5L8.2 8.3M17.3 7.3L13.6 8.5M6.1 16.5L8.3 12.6M17.6 16.6L13.6 12.6" stroke="#9a80c8" stroke-width="0.8"/></svg>
<div class="t" style="left:698px;top:110px;line-height:13px;font-size:11px;letter-spacing:0.18px;color:#000">Родинний звя&#x27;зок</div>
<div style="left:801px;top:101px;width:156px;height:30px;background:#f0f0f0;border-top:1px solid #fff;border-left:1px solid #fff;border-right:1px solid #696969;border-bottom:1px solid #696969;box-shadow:inset -1px -1px 0 #a0a0a0;box-sizing:border-box"></div>
<svg style="position:absolute;left:808px;top:100px" width="32" height="32" viewBox="0 0 32 32"><g fill="none" stroke="#8c4fd6" stroke-width="1.2"><g transform="rotate(-45 20 9.6)"><rect x="14.3" y="6" width="11.4" height="7.2" rx="3.6"/><rect x="17" y="8.2" width="6" height="2.8" rx="1.4"/></g><g transform="rotate(-45 10.4 18.6)"><rect x="4.7" y="15" width="11.4" height="7.2" rx="3.6"/><rect x="7.4" y="17.2" width="6" height="2.8" rx="1.4"/></g><path d="M11.5 17.5L19 10"/></g><path d="M7.8 12.8L8.8 11.8M9.8 10.8L10.8 9.8M12 8.6L13 7.6M17.5 21.8L18.5 20.8M19.8 19.5L20.8 18.5M22 17.2L23 16.2" stroke="#8c4fd6" stroke-width="1"/></svg>
<div class="t" style="left:841px;top:110px;line-height:13px;font-size:11px;letter-spacing:0.18px;color:#000">Фамильні ланцюжки</div>
<div style="left:960px;top:101px;width:92px;height:30px;background:#f0f0f0;border-top:1px solid #fff;border-left:1px solid #fff;border-right:1px solid #696969;border-bottom:1px solid #696969;box-shadow:inset -1px -1px 0 #a0a0a0;box-sizing:border-box"></div>
<svg style="position:absolute;left:966px;top:100px" width="34" height="32" viewBox="0 0 34 32"><path d="M17.5 9.6C13.2 6.8 13 4 14.4 3.2C15.8 2.5 17 3.4 17.5 4.4C18 3.4 19.2 2.5 20.6 3.2C22 4 21.8 6.8 17.5 9.6Z" fill="none" stroke="#8c4fd6" stroke-width="1.1"/><path d="M11.5 19.5C10.3 18.3 9.8 16.5 10 14C10.2 11.5 11.8 10.5 13.7 10.5C15.8 10.5 17.3 11.8 17.3 14.3C17.3 16.5 16.6 18.3 15.5 19.5" fill="none" stroke="#8c4fd6" stroke-width="1.1"/><path d="M17.3 13.5C17.8 11.3 19.8 10.3 22 10.3C25.2 10.3 27.3 12.3 27.3 15.5C27.3 18.3 28 19.5 29.3 20.3" fill="none" stroke="#8c4fd6" stroke-width="1.1"/><path d="M19.3 14.5C20.5 13.5 22.5 13.2 24.8 14.2C25.2 17.5 23.8 19.6 22 19.6C20.2 19.6 19 18 19.3 14.5Z" fill="none" stroke="#8c4fd6" stroke-width="1"/><path d="M6.5 25.3C6.5 22.8 8.5 21.6 11.5 20.3M15.5 20.3L17 21M19.8 19.8C19.5 20.5 18.5 21 17.5 21.3M24.3 19.8C25 20.5 27.5 21.3 29 22.3C29.8 23 30 24 30 25.3H6.5" fill="none" stroke="#8c4fd6" stroke-width="1.1"/><path d="M8 23.8H28.5" stroke="#8c4fd6" stroke-dasharray="0.8 1.3"/></svg>
<div class="t" style="left:1000px;top:110px;line-height:13px;font-size:11px;letter-spacing:0.18px;color:#000">Шлюби</div>
<div style="left:1055px;top:101px;width:114px;height:30px;background:#f0f0f0;border-top:1px solid #fff;border-left:1px solid #fff;border-right:1px solid #696969;border-bottom:1px solid #696969;box-shadow:inset -1px -1px 0 #a0a0a0;box-sizing:border-box"></div>
<svg style="position:absolute;left:1068px;top:106px" width="22" height="18" viewBox="0 0 22 18"><rect x="0.6" y="0.6" width="20.8" height="17" rx="1.2" fill="none" stroke="#9a7fc8" stroke-width="1.2"/><path d="M1 0.6H21M1 17.6H21" stroke="#8c4fd6" stroke-width="1.2"/><path d="M2 2.6H20" stroke="#8c4fd6" stroke-dasharray="1 1.1"/><path d="M1 4.5H20.5" stroke="#9a80c8" stroke-width="1"/><g fill="none" stroke="#8c4fd6" stroke-width="1"><path d="M6 15.5V11.2C6 10 8.4 10 8.4 11.2V15.5"/><path d="M10.2 15.5V6.8H12.6V15.5"/><path d="M12.8 8.5H15.4V15.5" fill="#c0b8d0"/><path d="M3.8 15.6H17.8" stroke-width="1.2"/></g></svg>
<div class="t" style="left:1095px;top:110px;line-height:13px;font-size:11px;letter-spacing:0.18px;color:#000">Статистика</div>
<div style="left:1172px;top:101px;width:143px;height:30px;background:repeating-conic-gradient(#ffffff 0 25%,#f0f0f0 0 50%) 0 0/2px 2px;border-top:1px solid #696969;border-left:1px solid #696969;border-right:1px solid #fff;border-bottom:1px solid #fff;box-shadow:inset 1px 1px 0 #a0a0a0;box-sizing:border-box"></div>
<svg style="position:absolute;left:1180px;top:100px" width="34" height="32" viewBox="0 0 34 32"><path d="M9.8 6.3H20M12.2 3.9L9.6 6.3L12.2 8.7M14.8 9.4H24.4M22 7L24.6 9.4L22 11.8" fill="none" stroke="#8c4fd6" stroke-width="1.2"/><path d="M10.5 21.5C9 20 8.8 18 9 15.5C9.2 13.3 10.8 12.5 12.8 12.5C14.8 12.5 16.3 13.5 16.5 15.5C16.7 18 16 20 15 21.5M18.7 21.5C17.7 20 17.2 18 17.5 15.5C17.7 13.3 19.2 12.5 21.2 12.5C23.2 12.5 24.7 13.5 25 15.5C25.2 18 24.7 20 23.7 21.5" fill="none" stroke="#8c4fd6" stroke-width="1.1"/><path d="M5.6 27.6V25.5C5.6 23.5 8 22.5 10.5 21.5M15 21.5C15.8 22.4 16.4 23 17 23.3C17.6 23 18.1 22.4 18.7 21.5M23.7 21.5C26.2 22.5 28.4 23.5 28.4 25.5V27.6H5.6" fill="none" stroke="#8c4fd6" stroke-width="1.2"/><path d="M7.2 25.7H27" stroke="#8c4fd6" stroke-dasharray="0.8 1.3"/></svg>
<div class="t" style="left:1213px;top:110px;line-height:13px;font-size:11px;letter-spacing:0.18px;color:#000">Пошук дублікатів</div>
<div style="left:508px;top:134px;width:217px;height:30px;background:#f0f0f0;border-top:1px solid #fff;border-left:1px solid #fff;border-right:1px solid #696969;border-bottom:1px solid #696969;box-shadow:inset -1px -1px 0 #a0a0a0;box-sizing:border-box"></div>
<svg style="position:absolute;left:570px;top:137px" width="23" height="23" viewBox="0 0 23 23"><path d="M1.2 3.8L3.8 1.2L11 8.4L8.4 11Z" fill="none" stroke="#8c4fd6" stroke-width="1.2"/><path d="M12.8 15.6L15.6 12.8L21.6 18.8C22.2 19.5 22.2 20.6 21.5 21.4C20.7 22.1 19.6 22.1 18.9 21.5Z" fill="#b898e8" stroke="#8c4fd6" stroke-width="1.2"/><circle cx="5.2" cy="17.8" r="4.2" fill="#f0f0f0" stroke="#8c4fd6" stroke-width="1.2"/><circle cx="5.2" cy="17.8" r="1.5" fill="none" stroke="#8c4fd6" stroke-width="1.1"/><path d="M7.6 14.6L14 8.2M9.3 16.3L15.7 9.9" stroke="#8c4fd6" stroke-width="1.1"/><path d="M14 8.2C12.5 4.5 15 0.8 19 1.2L16.3 3.9L18.9 6.5L21.7 3.8C22 7.7 18.6 10.9 15.7 9.9" fill="#f0f0f0" stroke="#8c4fd6" stroke-width="1.2"/></svg>
<div class="t" style="left:598px;top:143px;line-height:13px;font-size:11px;letter-spacing:0.18px;color:#000">Інструменти</div>
<div style="left:726px;top:134px;width:195px;height:30px;background:#f0f0f0;border-top:1px solid #fff;border-left:1px solid #fff;border-right:1px solid #696969;border-bottom:1px solid #696969;box-shadow:inset -1px -1px 0 #a0a0a0;box-sizing:border-box"></div>
<svg style="position:absolute;left:784px;top:134px" width="30" height="28" viewBox="0 0 30 28"><rect x="4.8" y="3.6" width="15" height="21" rx="1.3" fill="none" stroke="#9a7fc8" stroke-width="1.2"/><path d="M6 3.6H18.6M6 24.6H18.6" stroke="#8c4fd6" stroke-width="1.2"/><path d="M6.5 22.3H18.5" stroke="#8c4fd6" stroke-dasharray="0.8 1.3"/><rect x="10.6" y="12.3" width="11" height="3" rx="1.5" fill="#c8c0d4" stroke="#8c4fd6" stroke-width="1.1"/><path d="M21.5 12.3V9.9L26.8 13.8L21.5 17.7V15.3" fill="#f0f0f0" stroke="#8c4fd6" stroke-width="1.2" stroke-linejoin="round"/></svg>
<div class="t" style="left:815px;top:143px;line-height:13px;font-size:11px;letter-spacing:0.18px;color:#000">Експорт</div>
<div style="left:922px;top:134px;width:203px;height:30px;background:#f0f0f0;border-top:1px solid #fff;border-left:1px solid #fff;border-right:1px solid #696969;border-bottom:1px solid #696969;box-shadow:inset -1px -1px 0 #a0a0a0;box-sizing:border-box"></div>
<svg style="position:absolute;left:980px;top:134px" width="30" height="30" viewBox="0 0 30 30"><rect x="6.3" y="5.4" width="17.4" height="17.2" rx="1" fill="none" stroke="#8c4fd6" stroke-width="1.2"/><path d="M10.5 3.2V6.8M19.5 3.2V6.8" stroke="#8c4fd6" stroke-width="1.5" stroke-linecap="round"/><path d="M7 8.6H23" stroke="#a090c0" stroke-width="1.3"/><rect x="10" y="11" width="10.3" height="8.8" fill="#c8c8c8"/><rect x="11.2" y="12.3" width="1.1" height="1.1" fill="#fff"/><rect x="11.2" y="14.6" width="1.1" height="1.1" fill="#fff"/><rect x="11.2" y="16.9" width="1.1" height="1.1" fill="#fff"/><rect x="13.2" y="12.3" width="1.1" height="1.1" fill="#fff"/><rect x="13.2" y="14.6" width="1.1" height="1.1" fill="#fff"/><rect x="13.2" y="16.9" width="1.1" height="1.1" fill="#fff"/><rect x="16.2" y="12.3" width="1.1" height="1.1" fill="#fff"/><rect x="16.2" y="14.6" width="1.1" height="1.1" fill="#fff"/><rect x="16.2" y="16.9" width="1.1" height="1.1" fill="#fff"/><rect x="18.2" y="12.3" width="1.1" height="1.1" fill="#fff"/><rect x="18.2" y="14.6" width="1.1" height="1.1" fill="#fff"/><rect x="18.2" y="16.9" width="1.1" height="1.1" fill="#fff"/></svg>
<div class="t" style="left:1011px;top:143px;line-height:13px;font-size:11px;letter-spacing:0.18px;color:#000">Календар</div>
<div style="left:1126px;top:134px;width:189px;height:30px;background:#f0f0f0;border-top:1px solid #fff;border-left:1px solid #fff;border-right:1px solid #696969;border-bottom:1px solid #696969;box-shadow:inset -1px -1px 0 #a0a0a0;box-sizing:border-box"></div>
<svg style="position:absolute;left:1184px;top:134px" width="30" height="30" viewBox="0 0 30 30"><g fill="none" stroke="#8c4fd6" stroke-width="1.1"><path d="M9.2 9.8C9.2 12.5 10.7 14.6 12.5 14.6C14.3 14.6 15.8 12.5 15.8 9.8"/><path d="M8.6 10.6C7.8 6.6 9.5 4.1 12.5 4.1C15.5 4.1 17.3 6.3 16.5 10.6"/><path d="M9.6 7.8C11.2 6.8 13.6 6.5 16.2 7.4" stroke="#a890d0"/><path d="M6.3 20.2V18.5C6.3 17 8.4 16 10.8 15.2L12.5 16.2L14.2 15.2C14.8 15.4 15.2 15.6 15.6 15.9M6.3 20.2H15.2"/></g><circle cx="11.3" cy="11.2" r="0.55" fill="#8c4fd6"/><circle cx="13.7" cy="11.2" r="0.55" fill="#a890d0"/><path d="M15.6 23.4V17.8C15.6 16 17.6 14.2 19.6 14.2C21.6 14.2 23.6 16 23.6 17.8V23.4Z" fill="#f0f0f0" stroke="#8c4fd6" stroke-width="1.2"/><rect x="18.5" y="18.6" width="2.2" height="4.6" fill="none" stroke="#8c4fd6" stroke-width="1.1"/></svg>
<div class="t" style="left:1214px;top:143px;line-height:13px;font-size:11px;letter-spacing:0.18px;color:#000">Жителі</div>
<div style="left:511px;top:170px;width:623px;height:638px;background:#fff;border:1px solid #a0a0a8;box-sizing:border-box"></div>
<div style="left:512px;top:171px;width:603px;height:619px;overflow:hidden">
<div class="t" style="left:7px;top:1px;line-height:13px"><span style="font-size:11px;color:#ff0000"><span style="letter-spacing:0.02px">мати</span><span style="letter-spacing:0.00px"> </span><span style="letter-spacing:0.60px">-</span><span style="letter-spacing:0.00px"> </span><span style="letter-spacing:-0.65px">СЛЕПЕНОК</span><span style="letter-spacing:0.00px"> </span><span style="letter-spacing:-0.65px">М</span><span style="letter-spacing:0.02px">арта</span><span style="letter-spacing:0.00px"> </span><span style="letter-spacing:0.34px">(</span><span style="letter-spacing:-0.65px">М</span><span style="letter-spacing:0.02px">арина</span><span style="letter-spacing:0.34px">)</span><span style="letter-spacing:0.00px"> </span><span style="letter-spacing:-0.65px">С</span><span style="letter-spacing:0.02px">тепанова</span><span style="letter-spacing:0.00px"> </span><span style="letter-spacing:0.34px">(</span><span style="letter-spacing:-0.05px">1780</span><span style="letter-spacing:0.60px">-</span><span style="letter-spacing:-0.60px">?</span><span style="letter-spacing:0.34px">)</span></span></div>
<div class="t" style="left:5px;top:14px;line-height:13px"><span style="font-size:11px;color:#ff0000"><span style="letter-spacing:0.60px">-</span><span style="letter-spacing:0.00px"> </span></span><span style="font-size:11px;font-weight:bold;-webkit-text-stroke:0.25px;color:#ff0000"><span style="letter-spacing:-0.12px">НАУМЕНКО</span><span style="letter-spacing:0.00px"> </span><span style="letter-spacing:1.00px">(</span><span style="letter-spacing:-0.12px">СЛЕПЕНОК</span><span style="letter-spacing:1.00px">)</span><span style="letter-spacing:0.00px"> </span><span style="letter-spacing:-0.12px">С</span><span style="letter-spacing:0.43px">оломия</span><span style="letter-spacing:0.00px"> </span><span style="letter-spacing:-0.12px">С</span><span style="letter-spacing:0.43px">еменова</span><span style="letter-spacing:0.00px"> </span><span style="letter-spacing:1.00px">(</span><span style="letter-spacing:1.22px">1829</span><span style="letter-spacing:0.60px">-</span><span style="letter-spacing:-0.72px">?</span><span style="letter-spacing:1.00px">)</span></span><span style="font-size:11px;color:#ff0000"><span style="letter-spacing:0.00px"> </span><span style="letter-spacing:0.34px">(</span><span style="letter-spacing:0.67px">0</span><span style="letter-spacing:0.72px">+</span><span style="letter-spacing:0.34px">(</span><span style="letter-spacing:-0.05px">10</span><span style="letter-spacing:1.06px">)</span><span style="letter-spacing:0.72px">+</span><span style="letter-spacing:0.67px">0</span><span style="letter-spacing:0.72px">+</span><span style="letter-spacing:0.67px">7</span><span style="letter-spacing:0.72px">+</span><span style="letter-spacing:0.67px">0</span><span style="letter-spacing:0.72px">+</span><span style="letter-spacing:0.67px">0</span><span style="letter-spacing:0.72px">=</span><span style="letter-spacing:-0.05px">17</span><span style="letter-spacing:0.94px">/</span><span style="letter-spacing:-0.05px">23</span><span style="letter-spacing:0.34px">)</span><span style="letter-spacing:0.72px"> +</span><span style="letter-spacing:0.00px"> </span><span style="letter-spacing:0.34px">(</span><span style="letter-spacing:0.67px">0</span><span style="letter-spacing:0.72px">+</span><span style="letter-spacing:0.67px">7</span><span style="letter-spacing:0.72px">+</span><span style="letter-spacing:0.67px">6</span><span style="letter-spacing:0.72px">+</span><span style="letter-spacing:0.67px">0</span><span style="letter-spacing:0.72px">=</span><span style="letter-spacing:-0.05px">13</span><span style="letter-spacing:0.94px">/</span><span style="letter-spacing:-0.05px">13</span><span style="letter-spacing:0.34px">)</span><span style="letter-spacing:0.72px"> +</span><span style="letter-spacing:0.00px"> </span><span style="letter-spacing:0.34px">((</span><span style="letter-spacing:-0.05px">2</span><span style="letter-spacing:1.06px">)</span><span style="letter-spacing:0.72px">+</span><span style="letter-spacing:0.67px">0</span><span style="letter-spacing:0.72px">+</span><span style="letter-spacing:0.67px">0</span><span style="letter-spacing:0.72px">+</span><span style="letter-spacing:0.67px">3</span><span style="letter-spacing:0.72px">+</span><span style="letter-spacing:0.67px">0</span><span style="letter-spacing:0.72px">=</span><span style="letter-spacing:-0.05px">5</span><span style="letter-spacing:0.94px">/</span><span style="letter-spacing:-0.05px">23</span><span style="letter-spacing:0.34px">)</span><span style="letter-spacing:0.72px"> =</span><span style="letter-spacing:0.00px"> </span><span style="letter-spacing:-0.05px">35</span><span style="letter-spacing:0.94px">/</span><span style="letter-spacing:-0.05px">59</span></span></div>
<div class="t" style="left:10px;top:27px;line-height:13px"><span style="font-size:11px;color:#0000ff"><span style="letter-spacing:0.02px">батько</span><span style="letter-spacing:0.00px"> </span><span style="letter-spacing:0.60px">-</span><span style="letter-spacing:0.00px"> </span><span style="letter-spacing:-0.65px">СЛЕПЕНОК</span><span style="letter-spacing:0.00px"> </span><span style="letter-spacing:-0.65px">С</span><span style="letter-spacing:0.02px">емен</span><span style="letter-spacing:0.00px"> </span><span style="letter-spacing:-0.65px">Е</span><span style="letter-spacing:0.02px">мельянов</span><span style="letter-spacing:0.00px"> </span><span style="letter-spacing:0.34px">(</span><span style="letter-spacing:-0.05px">1779</span><span style="letter-spacing:0.34px">(</span><span style="letter-spacing:-0.05px">1787</span><span style="letter-spacing:0.34px">)</span><span style="letter-spacing:0.60px">-</span><span style="letter-spacing:-0.05px">01</span><span style="letter-spacing:0.60px">.</span><span style="letter-spacing:-0.05px">10</span><span style="letter-spacing:0.60px">.</span><span style="letter-spacing:-0.05px">1834</span><span style="letter-spacing:0.34px">)</span></span></div>
<div class="t" style="left:10px;top:40px;line-height:13px"><span style="font-size:11px;color:#ff0000"><span style="letter-spacing:0.02px">мати</span><span style="letter-spacing:0.00px"> </span><span style="letter-spacing:0.60px">-</span><span style="letter-spacing:0.00px"> </span><span style="letter-spacing:-0.65px">СЛЕПЕНОК</span><span style="letter-spacing:0.00px"> </span><span style="letter-spacing:-0.65px">М</span><span style="letter-spacing:0.02px">ария</span><span style="letter-spacing:0.00px"> </span><span style="letter-spacing:0.34px">(</span><span style="letter-spacing:-0.65px">М</span><span style="letter-spacing:0.02px">арианна</span><span style="letter-spacing:0.34px">)</span><span style="letter-spacing:0.00px"> </span><span style="letter-spacing:-0.65px">Г</span><span style="letter-spacing:0.02px">ригорьева</span><span style="letter-spacing:0.00px"> </span><span style="letter-spacing:0.34px">(</span><span style="letter-spacing:-0.05px">1785</span><span style="letter-spacing:0.60px">-</span><span style="letter-spacing:0.30px">&gt;</span><span style="letter-spacing:-0.05px">1850</span><span style="letter-spacing:0.34px">)</span></span></div>
<div class="t" style="left:5px;top:53px;line-height:13px"><span style="font-size:11px;color:#ff0000"><span style="letter-spacing:0.60px">-</span><span style="letter-spacing:0.00px"> </span></span><span style="font-size:11px;font-weight:bold;-webkit-text-stroke:0.25px;color:#ff0000"><span style="letter-spacing:-0.12px">БОРДЗУХА</span><span style="letter-spacing:0.00px"> </span><span style="letter-spacing:1.00px">(</span><span style="letter-spacing:-0.12px">СЛЕПЕНОК</span><span style="letter-spacing:1.00px">)</span><span style="letter-spacing:0.00px"> </span><span style="letter-spacing:-0.12px">К</span><span style="letter-spacing:0.43px">атерина</span><span style="letter-spacing:0.00px"> </span><span style="letter-spacing:-0.12px">С</span><span style="letter-spacing:0.43px">еменова</span><span style="letter-spacing:0.00px"> </span><span style="letter-spacing:1.00px">(</span><span style="letter-spacing:1.22px">24</span><span style="letter-spacing:0.30px">.</span><span style="letter-spacing:1.22px">11</span><span style="letter-spacing:0.30px">.</span><span style="letter-spacing:1.22px">1819</span><span style="letter-spacing:0.60px">-</span><span style="letter-spacing:-0.72px">?</span><span style="letter-spacing:1.00px">)</span></span><span style="font-size:11px;color:#ff0000"><span style="letter-spacing:0.00px"> </span><span style="letter-spacing:0.34px">(</span><span style="letter-spacing:0.67px">0</span><span style="letter-spacing:0.72px">+</span><span style="letter-spacing:0.34px">(</span><span style="letter-spacing:-0.05px">10</span><span style="letter-spacing:1.06px">)</span><span style="letter-spacing:0.72px">+</span><span style="letter-spacing:0.67px">0</span><span style="letter-spacing:0.72px">+</span><span style="letter-spacing:0.67px">7</span><span style="letter-spacing:0.72px">+</span><span style="letter-spacing:0.67px">5</span><span style="letter-spacing:0.72px">+</span><span style="letter-spacing:0.67px">0</span><span style="letter-spacing:0.72px">=</span><span style="letter-spacing:-0.05px">22</span><span style="letter-spacing:0.94px">/</span><span style="letter-spacing:-0.05px">23</span><span style="letter-spacing:0.34px">)</span><span style="letter-spacing:0.72px"> +</span><span style="letter-spacing:0.00px"> </span><span style="letter-spacing:0.34px">(</span><span style="letter-spacing:0.67px">0</span><span style="letter-spacing:0.72px">+</span><span style="letter-spacing:0.67px">7</span><span style="letter-spacing:0.72px">+</span><span style="letter-spacing:0.67px">6</span><span style="letter-spacing:0.72px">+</span><span style="letter-spacing:0.67px">0</span><span style="letter-spacing:0.72px">=</span><span style="letter-spacing:-0.05px">13</span><span style="letter-spacing:0.94px">/</span><span style="letter-spacing:-0.05px">13</span><span style="letter-spacing:0.34px">)</span><span style="letter-spacing:0.72px"> +</span><span style="letter-spacing:0.00px"> </span><span style="letter-spacing:0.34px">((</span><span style="letter-spacing:-0.05px">2</span><span style="letter-spacing:1.06px">)</span><span style="letter-spacing:0.72px">+</span><span style="letter-spacing:0.67px">0</span><span style="letter-spacing:0.72px">+</span><span style="letter-spacing:0.67px">0</span><span style="letter-spacing:0.72px">+</span><span style="letter-spacing:0.67px">3</span><span style="letter-spacing:0.72px">+</span><span style="letter-spacing:0.67px">0</span><span style="letter-spacing:0.72px">=</span><span style="letter-spacing:-0.05px">5</span><span style="letter-spacing:0.94px">/</span><span style="letter-spacing:-0.05px">23</span><span style="letter-spacing:0.34px">)</span></span></div>
<div class="t" style="left:10px;top:66px;line-height:13px"><span style="font-size:11px;color:#0000ff"><span style="letter-spacing:0.02px">батько</span><span style="letter-spacing:0.00px"> </span><span style="letter-spacing:0.60px">-</span><span style="letter-spacing:0.00px"> </span><span style="letter-spacing:-0.65px">СЛЕПЕНОК</span><span style="letter-spacing:0.00px"> </span><span style="letter-spacing:-0.65px">С</span><span style="letter-spacing:0.02px">емен</span><span style="letter-spacing:0.00px"> </span><span style="letter-spacing:-0.65px">Е</span><span style="letter-spacing:0.02px">мельянов</span><span style="letter-spacing:0.00px"> </span><span style="letter-spacing:0.34px">(</span><span style="letter-spacing:-0.05px">1779</span><span style="letter-spacing:0.34px">(</span><span style="letter-spacing:-0.05px">1787</span><span style="letter-spacing:0.34px">)</span><span style="letter-spacing:0.60px">-</span><span style="letter-spacing:-0.05px">01</span><span style="letter-spacing:0.60px">.</span><span style="letter-spacing:-0.05px">10</span><span style="letter-spacing:0.60px">.</span><span style="letter-spacing:-0.05px">1834</span><span style="letter-spacing:0.34px">)</span></span></div>
<div class="t" style="left:10px;top:79px;line-height:13px"><span style="font-size:11px;color:#ff0000"><span style="letter-spacing:0.02px">мати</span><span style="letter-spacing:0.00px"> </span><span style="letter-spacing:0.60px">-</span><span style="letter-spacing:0.00px"> </span><span style="letter-spacing:-0.65px">СЛЕПЕНОК</span><span style="letter-spacing:0.00px"> </span><span style="letter-spacing:-0.65px">М</span><span style="letter-spacing:0.02px">ария</span><span style="letter-spacing:0.00px"> </span><span style="letter-spacing:0.34px">(</span><span style="letter-spacing:-0.65px">М</span><span style="letter-spacing:0.02px">арианна</span><span style="letter-spacing:0.34px">)</span><span style="letter-spacing:0.00px"> </span><span style="letter-spacing:-0.65px">Г</span><span style="letter-spacing:0.02px">ригорьева</span><span style="letter-spacing:0.00px"> </span><span style="letter-spacing:0.34px">(</span><span style="letter-spacing:-0.05px">1785</span><span style="letter-spacing:0.60px">-</span><span style="letter-spacing:0.30px">&gt;</span><span style="letter-spacing:-0.05px">1850</span><span style="letter-spacing:0.34px">)</span></span></div>
<div class="t" style="left:2px;top:92px;line-height:13px"><span style="font-size:11px;font-weight:bold;-webkit-text-stroke:0.25px;color:#0000ff;text-decoration:underline;text-decoration-skip-ink:none"><span style="letter-spacing:-0.12px">КАРАЩУК</span><span style="letter-spacing:0.00px"> </span><span style="letter-spacing:-0.12px">К</span><span style="letter-spacing:0.43px">арп</span><span style="letter-spacing:0.00px"> </span><span style="letter-spacing:-0.12px">Л</span><span style="letter-spacing:0.43px">аврентиев</span><span style="letter-spacing:0.00px"> </span><span style="letter-spacing:1.00px">(</span><span style="letter-spacing:1.22px">14</span><span style="letter-spacing:0.30px">.</span><span style="letter-spacing:1.22px">10</span><span style="letter-spacing:0.30px">.</span><span style="letter-spacing:1.22px">1805</span><span style="letter-spacing:0.60px">-</span><span style="letter-spacing:1.22px">25</span><span style="letter-spacing:0.30px">.</span><span style="letter-spacing:1.22px">02</span><span style="letter-spacing:0.30px">.</span><span style="letter-spacing:1.22px">1807</span><span style="letter-spacing:1.00px">)</span></span></div>
<div class="t" style="left:7px;top:105px;line-height:13px"><span style="font-size:11px;color:#0000ff"><span style="letter-spacing:0.02px">батько</span><span style="letter-spacing:0.00px"> </span><span style="letter-spacing:0.60px">-</span><span style="letter-spacing:0.00px"> </span><span style="letter-spacing:-0.65px">КАРАЩУК</span><span style="letter-spacing:0.00px"> </span><span style="letter-spacing:-0.65px">Л</span><span style="letter-spacing:0.02px">аврентий</span><span style="letter-spacing:0.00px"> </span><span style="letter-spacing:-0.65px">П</span><span style="letter-spacing:0.02px">авлов</span><span style="letter-spacing:0.00px"> </span><span style="letter-spacing:0.34px">(</span><span style="letter-spacing:-0.05px">1770</span><span style="letter-spacing:0.60px">..</span><span style="letter-spacing:-0.05px">1773</span><span style="letter-spacing:0.60px">-</span><span style="letter-spacing:-0.05px">08</span><span style="letter-spacing:0.60px">.</span><span style="letter-spacing:-0.05px">05</span><span style="letter-spacing:0.60px">.</span><span style="letter-spacing:-0.05px">1813</span><span style="letter-spacing:0.34px">)</span></span></div>
<div class="t" style="left:7px;top:118px;line-height:13px"><span style="font-size:11px;color:#ff0000"><span style="letter-spacing:0.02px">мати</span><span style="letter-spacing:0.00px"> </span><span style="letter-spacing:0.60px">-</span><span style="letter-spacing:0.00px"> </span><span style="letter-spacing:-0.65px">КАРАЩУК</span><span style="letter-spacing:0.00px"> </span><span style="letter-spacing:0.34px">(</span><span style="letter-spacing:-0.65px">ВАНЧЕНКО</span><span style="letter-spacing:0.34px">)</span><span style="letter-spacing:0.00px"> </span><span style="letter-spacing:-0.65px">П</span><span style="letter-spacing:0.02px">араскева</span><span style="letter-spacing:0.00px"> </span><span style="letter-spacing:-0.65px">Х</span><span style="letter-spacing:0.02px">омовна</span><span style="letter-spacing:0.00px"> </span><span style="letter-spacing:0.34px">(</span><span style="letter-spacing:-0.65px">Ф</span><span style="letter-spacing:0.02px">омина</span><span style="letter-spacing:0.34px">)</span><span style="letter-spacing:0.00px"> </span><span style="letter-spacing:0.34px">(</span><span style="letter-spacing:-0.05px">1774</span><span style="letter-spacing:0.60px">-</span><span style="letter-spacing:-0.60px">?</span><span style="letter-spacing:0.34px">)</span></span></div>
<div class="t" style="left:5px;top:131px;line-height:13px"><span style="font-size:11px;color:#0000ff"><span style="letter-spacing:0.60px">-</span><span style="letter-spacing:0.00px"> </span></span><span style="font-size:11px;font-weight:bold;-webkit-text-stroke:0.25px;color:#0000ff"><span style="letter-spacing:-0.12px">КАРАЩУК</span><span style="letter-spacing:0.00px"> </span><span style="letter-spacing:-0.12px">К</span><span style="letter-spacing:0.43px">арп</span><span style="letter-spacing:0.00px"> </span><span style="letter-spacing:-0.12px">В</span><span style="letter-spacing:0.43px">ласов</span><span style="letter-spacing:0.00px"> </span><span style="letter-spacing:1.00px">(</span><span style="letter-spacing:1.22px">1805</span><span style="letter-spacing:0.60px">-</span><span style="letter-spacing:1.22px">25</span><span style="letter-spacing:0.30px">.</span><span style="letter-spacing:1.22px">02</span><span style="letter-spacing:0.30px">.</span><span style="letter-spacing:1.22px">1807</span><span style="letter-spacing:1.00px">)</span></span><span style="font-size:11px;color:#0000ff"><span style="letter-spacing:0.00px"> </span><span style="letter-spacing:0.34px">(</span><span style="letter-spacing:-0.05px">1</span><span style="letter-spacing:0.67px">0</span><span style="letter-spacing:0.72px">+</span><span style="letter-spacing:0.67px">0</span><span style="letter-spacing:0.72px">+</span><span style="letter-spacing:0.67px">0</span><span style="letter-spacing:0.72px">+</span><span style="letter-spacing:0.67px">6</span><span style="letter-spacing:0.72px">+</span><span style="letter-spacing:0.67px">0</span><span style="letter-spacing:0.72px">=</span><span style="letter-spacing:-0.05px">16</span><span style="letter-spacing:0.94px">/</span><span style="letter-spacing:-0.05px">23</span><span style="letter-spacing:0.34px">)</span><span style="letter-spacing:0.72px"> +</span><span style="letter-spacing:0.00px"> </span><span style="letter-spacing:0.34px">(</span><span style="letter-spacing:0.67px">0</span><span style="letter-spacing:0.72px">+</span><span style="letter-spacing:0.67px">7</span><span style="letter-spacing:0.72px">+</span><span style="letter-spacing:0.67px">2</span><span style="letter-spacing:0.72px">+</span><span style="letter-spacing:0.67px">0</span><span style="letter-spacing:0.72px">=</span><span style="letter-spacing:-0.05px">9</span><span style="letter-spacing:0.94px">/</span><span style="letter-spacing:-0.05px">13</span><span style="letter-spacing:0.34px">)</span><span style="letter-spacing:0.72px"> +</span><span style="letter-spacing:0.00px"> </span><span style="letter-spacing:0.34px">((</span><span style="letter-spacing:-0.05px">6</span><span style="letter-spacing:1.06px">)</span><span style="letter-spacing:0.72px">+</span><span style="letter-spacing:0.67px">0</span><span style="letter-spacing:0.72px">+</span><span style="letter-spacing:0.67px">0</span><span style="letter-spacing:0.72px">+</span><span style="letter-spacing:0.67px">3</span><span style="letter-spacing:0.72px">+</span><span style="letter-spacing:0.67px">0</span><span style="letter-spacing:0.72px">=</span><span style="letter-spacing:-0.05px">10</span><span style="letter-spacing:0.94px">/</span><span style="letter-spacing:-0.05px">23</span><span style="letter-spacing:0.34px">)</span><span style="letter-spacing:0.72px"> =</span><span style="letter-spacing:0.00px"> </span><span style="letter-spacing:-0.05px">35</span><span style="letter-spacing:0.94px">/</span><span style="letter-spacing:-0.05px">59</span></span></div>
<div class="t" style="left:10px;top:144px;line-height:13px"><span style="font-size:11px;color:#0000ff"><span style="letter-spacing:0.02px">батько</span><span style="letter-spacing:0.00px"> </span><span style="letter-spacing:0.60px">-</span><span style="letter-spacing:0.00px"> </span><span style="letter-spacing:-0.65px">КАРАЩУК</span><span style="letter-spacing:0.00px"> </span><span style="letter-spacing:-0.65px">В</span><span style="letter-spacing:0.02px">лас</span><span style="letter-spacing:0.34px">(</span><span style="letter-spacing:-0.65px">У</span><span style="letter-spacing:0.02px">лас</span><span style="letter-spacing:0.34px">)</span><span style="letter-spacing:0.00px"> </span><span style="letter-spacing:-0.65px">П</span><span style="letter-spacing:0.02px">авлов</span><span style="letter-spacing:0.00px"> </span><span style="letter-spacing:0.34px">(</span><span style="letter-spacing:-0.05px">1776</span><span style="letter-spacing:0.60px">-</span><span style="letter-spacing:-0.05px">1826</span><span style="letter-spacing:0.34px">)</span></span></div>
<div class="t" style="left:10px;top:157px;line-height:13px"><span style="font-size:11px;color:#ff0000"><span style="letter-spacing:0.02px">мати</span><span style="letter-spacing:0.00px"> </span><span style="letter-spacing:0.60px">-</span><span style="letter-spacing:0.00px"> </span><span style="letter-spacing:-0.65px">КАРАЩУК</span><span style="letter-spacing:0.00px"> </span><span style="letter-spacing:0.34px">(</span><span style="letter-spacing:-0.65px">НАЙДЕНКО</span><span style="letter-spacing:0.34px">)</span><span style="letter-spacing:0.00px"> </span><span style="letter-spacing:-0.65px">Д</span><span style="letter-spacing:0.02px">омникия</span><span style="letter-spacing:0.00px"> </span><span style="letter-spacing:-0.65px">И</span><span style="letter-spacing:0.02px">осифова</span><span style="letter-spacing:0.00px"> </span><span style="letter-spacing:0.34px">(</span><span style="letter-spacing:-0.05px">1778</span><span style="letter-spacing:0.60px">-</span><span style="letter-spacing:-0.60px">?</span><span style="letter-spacing:0.34px">)</span></span></div>
<div class="t" style="left:2px;top:170px;line-height:13px"><span style="font-size:11px;font-weight:bold;-webkit-text-stroke:0.25px;color:#ff0000;text-decoration:underline;text-decoration-skip-ink:none"><span style="letter-spacing:1.00px">(</span><span style="letter-spacing:-0.12px">ОВСЯНИЧЕНКО</span><span style="letter-spacing:1.00px">)</span><span style="letter-spacing:0.00px"> </span><span style="letter-spacing:-0.12px">Л</span><span style="letter-spacing:0.43px">укерья</span><span style="letter-spacing:0.00px"> </span><span style="letter-spacing:-0.12px">К</span><span style="letter-spacing:0.43px">узьмова</span><span style="letter-spacing:0.00px"> </span><span style="letter-spacing:1.00px">(</span><span style="letter-spacing:1.22px">1831</span><span style="letter-spacing:0.60px">-</span><span style="letter-spacing:-0.72px">?</span><span style="letter-spacing:1.00px">)</span></span></div>
<div class="t" style="left:7px;top:183px;line-height:13px"><span style="font-size:11px;color:#0000ff"><span style="letter-spacing:0.02px">батько</span><span style="letter-spacing:0.00px"> </span><span style="letter-spacing:0.60px">-</span><span style="letter-spacing:0.00px"> </span><span style="letter-spacing:-0.65px">ОВСЯННИЧЕНКО</span><span style="letter-spacing:0.00px"> </span><span style="letter-spacing:-0.65px">К</span><span style="letter-spacing:0.02px">осма</span><span style="letter-spacing:0.34px">(</span><span style="letter-spacing:-0.65px">К</span><span style="letter-spacing:0.02px">узьма</span><span style="letter-spacing:0.34px">)</span><span style="letter-spacing:0.00px"> </span><span style="letter-spacing:-0.65px">К</span><span style="letter-spacing:0.02px">ирилов</span><span style="letter-spacing:0.00px"> </span><span style="letter-spacing:0.34px">(</span><span style="letter-spacing:-0.05px">1801</span><span style="letter-spacing:0.60px">-</span><span style="letter-spacing:-0.60px">?</span><span style="letter-spacing:0.34px">)</span></span></div>
<div class="t" style="left:7px;top:196px;line-height:13px"><span style="font-size:11px;color:#ff0000"><span style="letter-spacing:0.02px">мати</span><span style="letter-spacing:0.00px"> </span><span style="letter-spacing:0.60px">-</span><span style="letter-spacing:0.00px"> </span><span style="letter-spacing:-0.65px">ОВСЯНИЧЕНКО</span><span style="letter-spacing:0.00px"> </span><span style="letter-spacing:-0.65px">М</span><span style="letter-spacing:0.02px">арья</span><span style="letter-spacing:0.00px"> </span><span style="letter-spacing:0.34px">(</span><span style="letter-spacing:-0.05px">1806</span><span style="letter-spacing:0.60px">-</span><span style="letter-spacing:0.30px">&lt;</span><span style="letter-spacing:-0.05px">1866</span><span style="letter-spacing:0.34px">)</span></span></div>
<div class="t" style="left:5px;top:209px;line-height:13px"><span style="font-size:11px;color:#ff0000"><span style="letter-spacing:0.60px">-</span><span style="letter-spacing:0.00px"> </span></span><span style="font-size:11px;font-weight:bold;-webkit-text-stroke:0.25px;color:#ff0000"><span style="letter-spacing:1.00px">(</span><span style="letter-spacing:-0.12px">ОВСЯНИЧЕНКО</span><span style="letter-spacing:1.00px">)</span><span style="letter-spacing:0.00px"> </span><span style="letter-spacing:-0.12px">Л</span><span style="letter-spacing:0.43px">укерья</span><span style="letter-spacing:0.00px"> </span><span style="letter-spacing:-0.12px">П</span><span style="letter-spacing:0.43px">антелеймонова</span><span style="letter-spacing:0.00px"> </span><span style="letter-spacing:1.00px">(</span><span style="letter-spacing:1.22px">1830</span><span style="letter-spacing:0.60px">-</span><span style="letter-spacing:-0.72px">?</span><span style="letter-spacing:1.00px">)</span></span><span style="font-size:11px;color:#ff0000"><span style="letter-spacing:0.00px"> </span><span style="letter-spacing:0.34px">(</span><span style="letter-spacing:0.67px">0</span><span style="letter-spacing:0.72px">+</span><span style="letter-spacing:0.34px">(</span><span style="letter-spacing:-0.05px">10</span><span style="letter-spacing:1.06px">)</span><span style="letter-spacing:0.72px">+</span><span style="letter-spacing:0.67px">0</span><span style="letter-spacing:0.72px">+</span><span style="letter-spacing:0.67px">0</span><span style="letter-spacing:0.72px">+</span><span style="letter-spacing:0.67px">5</span><span style="letter-spacing:0.72px">+</span><span style="letter-spacing:0.67px">0</span><span style="letter-spacing:0.72px">=</span><span style="letter-spacing:-0.05px">15</span><span style="letter-spacing:0.94px">/</span><span style="letter-spacing:-0.05px">23</span><span style="letter-spacing:0.34px">)</span><span style="letter-spacing:0.72px"> +</span><span style="letter-spacing:0.00px"> </span><span style="letter-spacing:0.34px">(</span><span style="letter-spacing:0.67px">0</span><span style="letter-spacing:0.72px">+</span><span style="letter-spacing:0.67px">7</span><span style="letter-spacing:0.72px">+</span><span style="letter-spacing:0.67px">4</span><span style="letter-spacing:0.72px">+</span><span style="letter-spacing:0.67px">0</span><span style="letter-spacing:0.72px">=</span><span style="letter-spacing:-0.05px">11</span><span style="letter-spacing:0.94px">/</span><span style="letter-spacing:-0.05px">13</span><span style="letter-spacing:0.34px">)</span><span style="letter-spacing:0.72px"> +</span><span style="letter-spacing:0.00px"> </span><span style="letter-spacing:0.34px">((</span><span style="letter-spacing:-0.05px">2</span><span style="letter-spacing:1.06px">)</span><span style="letter-spacing:0.72px">+</span><span style="letter-spacing:0.67px">0</span><span style="letter-spacing:0.72px">+</span><span style="letter-spacing:0.67px">0</span><span style="letter-spacing:0.72px">+</span><span style="letter-spacing:0.67px">3</span><span style="letter-spacing:0.72px">+</span><span style="letter-spacing:0.67px">0</span><span style="letter-spacing:0.72px">=</span><span style="letter-spacing:-0.05px">5</span><span style="letter-spacing:0.94px">/</span><span style="letter-spacing:-0.05px">23</span><span style="letter-spacing:0.34px">)</span></span></div>
<div class="t" style="left:10px;top:222px;line-height:13px"><span style="font-size:11px;color:#0000ff"><span style="letter-spacing:0.02px">батько</span><span style="letter-spacing:0.00px"> </span><span style="letter-spacing:0.60px">-</span><span style="letter-spacing:0.00px"> </span><span style="letter-spacing:-0.65px">ОВСЯННИЧЕНКО</span><span style="letter-spacing:0.00px"> </span><span style="letter-spacing:-0.65px">П</span><span style="letter-spacing:0.02px">антелеймон</span><span style="letter-spacing:0.00px"> </span><span style="letter-spacing:-0.65px">К</span><span style="letter-spacing:0.02px">ирилов</span><span style="letter-spacing:0.00px"> </span><span style="letter-spacing:0.34px">(</span><span style="letter-spacing:-0.05px">1803</span><span style="letter-spacing:0.60px">-</span><span style="letter-spacing:-0.05px">1847</span><span style="letter-spacing:0.34px">)</span></span></div>
<div class="t" style="left:10px;top:235px;line-height:13px"><span style="font-size:11px;color:#ff0000"><span style="letter-spacing:0.02px">мати</span><span style="letter-spacing:0.00px"> </span><span style="letter-spacing:0.60px">-</span><span style="letter-spacing:0.00px"> </span><span style="letter-spacing:-0.65px">ОВСЯНИЧЕНКО</span><span style="letter-spacing:0.00px"> </span><span style="letter-spacing:-0.65px">Е</span><span style="letter-spacing:0.02px">вдокия</span><span style="letter-spacing:0.00px"> </span><span style="letter-spacing:0.34px">(</span><span style="letter-spacing:-0.05px">1808</span><span style="letter-spacing:0.60px">-</span><span style="letter-spacing:-0.60px">?</span><span style="letter-spacing:0.34px">)</span></span></div>
<div class="t" style="left:2px;top:248px;line-height:13px"><span style="font-size:11px;font-weight:bold;-webkit-text-stroke:0.25px;color:#ff0000;text-decoration:underline;text-decoration-skip-ink:none"><span style="letter-spacing:-0.12px">БОРДЗУХА</span><span style="letter-spacing:0.00px"> </span><span style="letter-spacing:1.00px">(</span><span style="letter-spacing:-0.12px">СЛЕПЕНОК</span><span style="letter-spacing:1.00px">)</span><span style="letter-spacing:0.00px"> </span><span style="letter-spacing:-0.12px">К</span><span style="letter-spacing:0.43px">атерина</span><span style="letter-spacing:0.00px"> </span><span style="letter-spacing:-0.12px">С</span><span style="letter-spacing:0.43px">еменова</span><span style="letter-spacing:0.00px"> </span><span style="letter-spacing:1.00px">(</span><span style="letter-spacing:1.22px">24</span><span style="letter-spacing:0.30px">.</span><span style="letter-spacing:1.22px">11</span><span style="letter-spacing:0.30px">.</span><span style="letter-spacing:1.22px">1819</span><span style="letter-spacing:0.60px">-</span><span style="letter-spacing:-0.72px">?</span><span style="letter-spacing:1.00px">)</span></span></div>
<div class="t" style="left:7px;top:261px;line-height:13px"><span style="font-size:11px;color:#0000ff"><span style="letter-spacing:0.02px">батько</span><span style="letter-spacing:0.00px"> </span><span style="letter-spacing:0.60px">-</span><span style="letter-spacing:0.00px"> </span><span style="letter-spacing:-0.65px">СЛЕПЕНОК</span><span style="letter-spacing:0.00px"> </span><span style="letter-spacing:-0.65px">С</span><span style="letter-spacing:0.02px">емен</span><span style="letter-spacing:0.00px"> </span><span style="letter-spacing:-0.65px">Е</span><span style="letter-spacing:0.02px">мельянов</span><span style="letter-spacing:0.00px"> </span><span style="letter-spacing:0.34px">(</span><span style="letter-spacing:-0.05px">1779</span><span style="letter-spacing:0.34px">(</span><span style="letter-spacing:-0.05px">1787</span><span style="letter-spacing:0.34px">)</span><span style="letter-spacing:0.60px">-</span><span style="letter-spacing:-0.05px">01</span><span style="letter-spacing:0.60px">.</span><span style="letter-spacing:-0.05px">10</span><span style="letter-spacing:0.60px">.</span><span style="letter-spacing:-0.05px">1834</span><span style="letter-spacing:0.34px">)</span></span></div>
<div class="t" style="left:7px;top:274px;line-height:13px"><span style="font-size:11px;color:#ff0000"><span style="letter-spacing:0.02px">мати</span><span style="letter-spacing:0.00px"> </span><span style="letter-spacing:0.60px">-</span><span style="letter-spacing:0.00px"> </span><span style="letter-spacing:-0.65px">СЛЕПЕНОК</span><span style="letter-spacing:0.00px"> </span><span style="letter-spacing:-0.65px">М</span><span style="letter-spacing:0.02px">ария</span><span style="letter-spacing:0.00px"> </span><span style="letter-spacing:0.34px">(</span><span style="letter-spacing:-0.65px">М</span><span style="letter-spacing:0.02px">арианна</span><span style="letter-spacing:0.34px">)</span><span style="letter-spacing:0.00px"> </span><span style="letter-spacing:-0.65px">Г</span><span style="letter-spacing:0.02px">ригорьева</span><span style="letter-spacing:0.00px"> </span><span style="letter-spacing:0.34px">(</span><span style="letter-spacing:-0.05px">1785</span><span style="letter-spacing:0.60px">-</span><span style="letter-spacing:0.30px">&gt;</span><span style="letter-spacing:-0.05px">1850</span><span style="letter-spacing:0.34px">)</span></span></div>
<div class="t" style="left:5px;top:287px;line-height:13px"><span style="font-size:11px;color:#ff0000"><span style="letter-spacing:0.60px">-</span><span style="letter-spacing:0.00px"> </span></span><span style="font-size:11px;font-weight:bold;-webkit-text-stroke:0.25px;color:#ff0000"><span style="letter-spacing:1.00px">(</span><span style="letter-spacing:-0.12px">СЛЕПЕНОК</span><span style="letter-spacing:1.00px">)</span><span style="letter-spacing:0.00px"> </span><span style="letter-spacing:-0.12px">А</span><span style="letter-spacing:0.43px">нна</span><span style="letter-spacing:0.00px"> </span><span style="letter-spacing:-0.12px">С</span><span style="letter-spacing:0.43px">еменова</span><span style="letter-spacing:0.00px"> </span><span style="letter-spacing:1.00px">(</span><span style="letter-spacing:1.22px">1810</span><span style="letter-spacing:0.60px">-</span><span style="letter-spacing:-0.72px">?</span><span style="letter-spacing:1.00px">)</span></span><span style="font-size:11px;color:#ff0000"><span style="letter-spacing:0.00px"> </span><span style="letter-spacing:0.34px">(</span><span style="letter-spacing:0.67px">0</span><span style="letter-spacing:0.72px">+</span><span style="letter-spacing:0.34px">(</span><span style="letter-spacing:-0.05px">10</span><span style="letter-spacing:1.06px">)</span><span style="letter-spacing:0.72px">+</span><span style="letter-spacing:0.67px">0</span><span style="letter-spacing:0.72px">+</span><span style="letter-spacing:0.67px">7</span><span style="letter-spacing:0.72px">+</span><span style="letter-spacing:0.67px">0</span><span style="letter-spacing:0.72px">+</span><span style="letter-spacing:0.67px">0</span><span style="letter-spacing:0.72px">=</span><span style="letter-spacing:-0.05px">17</span><span style="letter-spacing:0.94px">/</span><span style="letter-spacing:-0.05px">23</span><span style="letter-spacing:0.34px">)</span><span style="letter-spacing:0.72px"> +</span><span style="letter-spacing:0.00px"> </span><span style="letter-spacing:0.34px">(</span><span style="letter-spacing:0.67px">0</span><span style="letter-spacing:0.72px">+</span><span style="letter-spacing:0.67px">7</span><span style="letter-spacing:0.72px">+</span><span style="letter-spacing:0.67px">6</span><span style="letter-spacing:0.72px">+</span><span style="letter-spacing:0.67px">0</span><span style="letter-spacing:0.72px">=</span><span style="letter-spacing:-0.05px">13</span><span style="letter-spacing:0.94px">/</span><span style="letter-spacing:-0.05px">13</span><span style="letter-spacing:0.34px">)</span><span style="letter-spacing:0.72px"> +</span><span style="letter-spacing:0.00px"> </span><span style="letter-spacing:0.34px">((</span><span style="letter-spacing:-0.05px">2</span><span style="letter-spacing:1.06px">)</span><span style="letter-spacing:0.72px">+</span><span style="letter-spacing:0.67px">0</span><span style="letter-spacing:0.72px">+</span><span style="letter-spacing:0.67px">0</span><span style="letter-spacing:0.72px">+</span><span style="letter-spacing:0.67px">3</span><span style="letter-spacing:0.72px">+</span><span style="letter-spacing:0.67px">0</span><span style="letter-spacing:0.72px">=</span><span style="letter-spacing:-0.05px">5</span><span style="letter-spacing:0.94px">/</span><span style="letter-spacing:-0.05px">23</span><span style="letter-spacing:0.34px">)</span><span style="letter-spacing:0.72px"> =</span><span style="letter-spacing:0.00px"> </span><span style="letter-spacing:-0.05px">35</span><span style="letter-spacing:0.94px">/</span><span style="letter-spacing:-0.05px">59</span></span></div>
<div class="t" style="left:10px;top:300px;line-height:13px"><span style="font-size:11px;color:#0000ff"><span style="letter-spacing:0.02px">батько</span><span style="letter-spacing:0.00px"> </span><span style="letter-spacing:0.60px">-</span><span style="letter-spacing:0.00px"> </span><span style="letter-spacing:-0.65px">СЛЕПЕНОК</span><span style="letter-spacing:0.00px"> </span><span style="letter-spacing:-0.65px">С</span><span style="letter-spacing:0.02px">емен</span><span style="letter-spacing:0.00px"> </span><span style="letter-spacing:-0.65px">Е</span><span style="letter-spacing:0.02px">мельянов</span><span style="letter-spacing:0.00px"> </span><span style="letter-spacing:0.34px">(</span><span style="letter-spacing:-0.05px">1779</span><span style="letter-spacing:0.34px">(</span><span style="letter-spacing:-0.05px">1787</span><span style="letter-spacing:0.34px">)</span><span style="letter-spacing:0.60px">-</span><span style="letter-spacing:-0.05px">23</span><span style="letter-spacing:0.60px">.</span><span style="letter-spacing:-0.05px">12</span><span style="letter-spacing:0.60px">.</span><span style="letter-spacing:-0.05px">1837</span><span style="letter-spacing:0.34px">)</span></span></div>
<div class="t" style="left:10px;top:313px;line-height:13px"><span style="font-size:11px;color:#ff0000"><span style="letter-spacing:0.02px">мати</span><span style="letter-spacing:0.00px"> </span><span style="letter-spacing:0.60px">-</span><span style="letter-spacing:0.00px"> </span><span style="letter-spacing:-0.65px">СЛЕПЕНОК</span><span style="letter-spacing:0.00px"> </span><span style="letter-spacing:-0.65px">М</span><span style="letter-spacing:0.02px">арта</span><span style="letter-spacing:0.00px"> </span><span style="letter-spacing:0.34px">(</span><span style="letter-spacing:-0.65px">М</span><span style="letter-spacing:0.02px">арина</span><span style="letter-spacing:0.34px">)</span><span style="letter-spacing:0.00px"> </span><span style="letter-spacing:-0.65px">С</span><span style="letter-spacing:0.02px">тепанова</span><span style="letter-spacing:0.00px"> </span><span style="letter-spacing:0.34px">(</span><span style="letter-spacing:-0.05px">1780</span><span style="letter-spacing:0.60px">-</span><span style="letter-spacing:-0.60px">?</span><span style="letter-spacing:0.34px">)</span></span></div>
<div class="t" style="left:5px;top:326px;line-height:13px"><span style="font-size:11px;color:#ff0000"><span style="letter-spacing:0.60px">-</span><span style="letter-spacing:0.00px"> </span></span><span style="font-size:11px;font-weight:bold;-webkit-text-stroke:0.25px;color:#ff0000"><span style="letter-spacing:1.00px">(</span><span style="letter-spacing:-0.12px">СЛЕПЕНОК</span><span style="letter-spacing:1.00px">)</span><span style="letter-spacing:0.00px"> </span><span style="letter-spacing:-0.12px">П</span><span style="letter-spacing:0.43px">риська</span><span style="letter-spacing:0.00px"> </span><span style="letter-spacing:1.00px">(</span><span style="letter-spacing:-0.12px">Е</span><span style="letter-spacing:0.43px">вфросиния</span><span style="letter-spacing:1.00px">)</span><span style="letter-spacing:0.00px"> </span><span style="letter-spacing:-0.12px">С</span><span style="letter-spacing:0.43px">еменова</span><span style="letter-spacing:0.00px"> </span><span style="letter-spacing:1.00px">(</span><span style="letter-spacing:1.22px">1814</span><span style="letter-spacing:0.60px">-</span><span style="letter-spacing:-0.72px">?</span><span style="letter-spacing:1.00px">)</span></span><span style="font-size:11px;color:#ff0000"><span style="letter-spacing:0.00px"> </span><span style="letter-spacing:0.34px">(</span><span style="letter-spacing:0.67px">0</span><span style="letter-spacing:0.72px">+</span><span style="letter-spacing:0.34px">(</span><span style="letter-spacing:-0.05px">10</span><span style="letter-spacing:1.06px">)</span><span style="letter-spacing:0.72px">+</span><span style="letter-spacing:0.67px">0</span><span style="letter-spacing:0.72px">+</span><span style="letter-spacing:0.67px">7</span><span style="letter-spacing:0.72px">+</span><span style="letter-spacing:0.67px">3</span><span style="letter-spacing:0.72px">+</span><span style="letter-spacing:0.67px">0</span><span style="letter-spacing:0.72px">=</span><span style="letter-spacing:-0.05px">20</span><span style="letter-spacing:0.94px">/</span><span style="letter-spacing:-0.05px">23</span><span style="letter-spacing:0.34px">)</span><span style="letter-spacing:0.72px"> +</span><span style="letter-spacing:0.00px"> </span><span style="letter-spacing:0.34px">(</span><span style="letter-spacing:0.67px">0</span><span style="letter-spacing:0.72px">+</span><span style="letter-spacing:0.67px">7</span><span style="letter-spacing:0.72px">+</span><span style="letter-spacing:0.67px">6</span><span style="letter-spacing:0.72px">+</span><span style="letter-spacing:0.67px">0</span><span style="letter-spacing:0.72px">=</span><span style="letter-spacing:-0.05px">13</span><span style="letter-spacing:0.94px">/</span><span style="letter-spacing:-0.05px">13</span><span style="letter-spacing:0.34px">)</span><span style="letter-spacing:0.72px"> +</span><span style="letter-spacing:0.00px"> </span><span style="letter-spacing:0.34px">((</span><span style="letter-spacing:-0.05px">2</span><span style="letter-spacing:1.06px">)</span><span style="letter-spacing:0.72px">+</span><span style="letter-spacing:0.67px">0</span><span style="letter-spacing:0.72px">+</span><span style="letter-spacing:0.67px">0</span><span style="letter-spacing:0.72px">+</span><span style="letter-spacing:0.67px">3</span><span style="letter-spacing:0.72px">+</span><span style="letter-spacing:0.67px">0</span><span style="letter-spacing:0.72px">=</span><span style="letter-spacing:-0.05px">5</span><span style="letter-spacing:0.94px">/</span><span style="letter-spacing:-0.05px">23</span><span style="letter-spacing:0.34px">)</span></span></div>
<div class="t" style="left:10px;top:339px;line-height:13px"><span style="font-size:11px;color:#0000ff"><span style="letter-spacing:0.02px">батько</span><span style="letter-spacing:0.00px"> </span><span style="letter-spacing:0.60px">-</span><span style="letter-spacing:0.00px"> </span><span style="letter-spacing:-0.65px">СЛЕПЕНОК</span><span style="letter-spacing:0.00px"> </span><span style="letter-spacing:-0.65px">С</span><span style="letter-spacing:0.02px">емен</span><span style="letter-spacing:0.00px"> </span><span style="letter-spacing:-0.65px">Е</span><span style="letter-spacing:0.02px">мельянов</span><span style="letter-spacing:0.00px"> </span><span style="letter-spacing:0.34px">(</span><span style="letter-spacing:-0.05px">1779</span><span style="letter-spacing:0.34px">(</span><span style="letter-spacing:-0.05px">1787</span><span style="letter-spacing:0.34px">)</span><span style="letter-spacing:0.60px">-</span><span style="letter-spacing:-0.05px">23</span><span style="letter-spacing:0.60px">.</span><span style="letter-spacing:-0.05px">12</span><span style="letter-spacing:0.60px">.</span><span style="letter-spacing:-0.05px">1837</span><span style="letter-spacing:0.34px">)</span></span></div>
<div class="t" style="left:10px;top:352px;line-height:13px"><span style="font-size:11px;color:#ff0000"><span style="letter-spacing:0.02px">мати</span><span style="letter-spacing:0.00px"> </span><span style="letter-spacing:0.60px">-</span><span style="letter-spacing:0.00px"> </span><span style="letter-spacing:-0.65px">СЛЕПЕНОК</span><span style="letter-spacing:0.00px"> </span><span style="letter-spacing:-0.65px">М</span><span style="letter-spacing:0.02px">арта</span><span style="letter-spacing:0.00px"> </span><span style="letter-spacing:0.34px">(</span><span style="letter-spacing:-0.65px">М</span><span style="letter-spacing:0.02px">арина</span><span style="letter-spacing:0.34px">)</span><span style="letter-spacing:0.00px"> </span><span style="letter-spacing:-0.65px">С</span><span style="letter-spacing:0.02px">тепанова</span><span style="letter-spacing:0.00px"> </span><span style="letter-spacing:0.34px">(</span><span style="letter-spacing:-0.05px">1780</span><span style="letter-spacing:0.60px">-</span><span style="letter-spacing:-0.60px">?</span><span style="letter-spacing:0.34px">)</span></span></div>
<div class="t" style="left:2px;top:365px;line-height:13px"><span style="font-size:11px;font-weight:bold;-webkit-text-stroke:0.25px;color:#ff0000;text-decoration:underline;text-decoration-skip-ink:none"><span style="letter-spacing:1.00px">(</span><span style="letter-spacing:-0.12px">ЯКИМЕНКО</span><span style="letter-spacing:1.00px">)</span><span style="letter-spacing:0.00px"> </span><span style="letter-spacing:-0.12px">П</span><span style="letter-spacing:0.43px">араскева</span><span style="letter-spacing:0.00px"> </span><span style="letter-spacing:-0.12px">Т</span><span style="letter-spacing:0.43px">имофеева</span><span style="letter-spacing:0.00px"> </span><span style="letter-spacing:1.00px">(</span><span style="letter-spacing:1.22px">1797</span><span style="letter-spacing:0.60px">-</span><span style="letter-spacing:-0.72px">?</span><span style="letter-spacing:1.00px">)</span></span></div>
<div class="t" style="left:7px;top:378px;line-height:13px"><span style="font-size:11px;color:#0000ff"><span style="letter-spacing:0.02px">батько</span><span style="letter-spacing:0.00px"> </span><span style="letter-spacing:0.60px">-</span><span style="letter-spacing:0.00px"> </span><span style="letter-spacing:-0.65px">ЯКИМЕНКО</span><span style="letter-spacing:0.00px"> </span><span style="letter-spacing:-0.65px">Т</span><span style="letter-spacing:0.02px">имофей</span><span style="letter-spacing:0.00px"> </span><span style="letter-spacing:-0.65px">Я</span><span style="letter-spacing:0.02px">кимов</span><span style="letter-spacing:0.00px"> </span><span style="letter-spacing:0.34px">(</span><span style="letter-spacing:-0.05px">1765</span><span style="letter-spacing:0.60px">..</span><span style="letter-spacing:-0.05px">1776</span><span style="letter-spacing:0.60px">-</span><span style="letter-spacing:-0.05px">1833</span><span style="letter-spacing:0.34px">)</span></span></div>
<div class="t" style="left:7px;top:391px;line-height:13px"><span style="font-size:11px;color:#ff0000"><span style="letter-spacing:0.02px">мати</span><span style="letter-spacing:0.00px"> </span><span style="letter-spacing:0.60px">-</span><span style="letter-spacing:0.00px"> </span><span style="letter-spacing:-0.65px">ЯКИМЕНКО</span><span style="letter-spacing:0.00px"> </span><span style="letter-spacing:-0.65px">М</span><span style="letter-spacing:0.02px">ария</span><span style="letter-spacing:0.00px"> </span><span style="letter-spacing:-0.65px">И</span><span style="letter-spacing:0.02px">ванова</span><span style="letter-spacing:0.00px"> </span><span style="letter-spacing:0.34px">(</span><span style="letter-spacing:-0.05px">1764</span><span style="letter-spacing:0.60px">..</span><span style="letter-spacing:-0.05px">1776</span><span style="letter-spacing:0.60px">-</span><span style="letter-spacing:-0.60px">?</span><span style="letter-spacing:0.34px">)</span></span></div>
<div class="t" style="left:5px;top:404px;line-height:13px"><span style="font-size:11px;color:#ff0000"><span style="letter-spacing:0.60px">-</span><span style="letter-spacing:0.00px"> </span></span><span style="font-size:11px;font-weight:bold;-webkit-text-stroke:0.25px;color:#ff0000"><span style="letter-spacing:1.00px">(</span><span style="letter-spacing:-0.12px">ЯКИМЕНКО</span><span style="letter-spacing:1.00px">)</span><span style="letter-spacing:0.00px"> </span><span style="letter-spacing:-0.12px">Е</span><span style="letter-spacing:0.43px">вдокия</span><span style="letter-spacing:0.00px"> </span><span style="letter-spacing:-0.12px">П</span><span style="letter-spacing:0.43px">етровна</span><span style="letter-spacing:0.00px"> </span><span style="letter-spacing:1.00px">(</span><span style="letter-spacing:1.22px">1797</span><span style="letter-spacing:0.60px">-</span><span style="letter-spacing:-0.72px">?</span><span style="letter-spacing:1.00px">)</span></span><span style="font-size:11px;color:#ff0000"><span style="letter-spacing:0.00px"> </span><span style="letter-spacing:0.34px">(</span><span style="letter-spacing:0.67px">0</span><span style="letter-spacing:0.72px">+</span><span style="letter-spacing:0.34px">(</span><span style="letter-spacing:-0.05px">10</span><span style="letter-spacing:1.06px">)</span><span style="letter-spacing:0.72px">+</span><span style="letter-spacing:0.67px">0</span><span style="letter-spacing:0.72px">+</span><span style="letter-spacing:0.67px">0</span><span style="letter-spacing:0.72px">+</span><span style="letter-spacing:0.67px">6</span><span style="letter-spacing:0.72px">+</span><span style="letter-spacing:0.67px">0</span><span style="letter-spacing:0.72px">=</span><span style="letter-spacing:-0.05px">16</span><span style="letter-spacing:0.94px">/</span><span style="letter-spacing:-0.05px">23</span><span style="letter-spacing:0.34px">)</span><span style="letter-spacing:0.72px"> +</span><span style="letter-spacing:0.00px"> </span><span style="letter-spacing:0.34px">(</span><span style="letter-spacing:0.67px">0</span><span style="letter-spacing:0.72px">+</span><span style="letter-spacing:0.67px">7</span><span style="letter-spacing:0.72px">+</span><span style="letter-spacing:0.67px">3</span><span style="letter-spacing:0.72px">+</span><span style="letter-spacing:0.67px">0</span><span style="letter-spacing:0.72px">=</span><span style="letter-spacing:-0.05px">10</span><span style="letter-spacing:0.94px">/</span><span style="letter-spacing:-0.05px">13</span><span style="letter-spacing:0.34px">)</span><span style="letter-spacing:0.72px"> +</span><span style="letter-spacing:0.00px"> </span><span style="letter-spacing:0.34px">((</span><span style="letter-spacing:-0.05px">2</span><span style="letter-spacing:1.06px">)</span><span style="letter-spacing:0.72px">+</span><span style="letter-spacing:0.67px">0</span><span style="letter-spacing:0.72px">+</span><span style="letter-spacing:0.67px">7</span><span style="letter-spacing:0.72px">+</span><span style="letter-spacing:0.67px">1</span><span style="letter-spacing:0.72px">+</span><span style="letter-spacing:0.67px">0</span><span style="letter-spacing:0.72px">=</span><span style="letter-spacing:-0.05px">10</span><span style="letter-spacing:0.94px">/</span><span style="letter-spacing:-0.05px">23</span><span style="letter-spacing:0.34px">)</span><span style="letter-spacing:0.72px"> =</span><span style="letter-spacing:0.00px"> </span><span style="letter-spacing:-0.05px">36</span><span style="letter-spacing:0.94px">/</span><span style="letter-spacing:-0.05px">59</span></span></div>
<div class="t" style="left:10px;top:417px;line-height:13px"><span style="font-size:11px;color:#0000ff"><span style="letter-spacing:0.02px">батько</span><span style="letter-spacing:0.00px"> </span><span style="letter-spacing:0.60px">-</span><span style="letter-spacing:0.00px"> </span><span style="letter-spacing:-0.65px">ЯКИМЕНКО</span><span style="letter-spacing:0.00px"> </span><span style="letter-spacing:-0.65px">П</span><span style="letter-spacing:0.02px">етр</span><span style="letter-spacing:0.00px"> </span><span style="letter-spacing:-0.65px">Я</span><span style="letter-spacing:0.02px">кимов</span><span style="letter-spacing:0.00px"> </span><span style="letter-spacing:0.34px">(</span><span style="letter-spacing:-0.05px">1761</span><span style="letter-spacing:0.60px">..</span><span style="letter-spacing:-0.05px">1766</span><span style="letter-spacing:0.60px">-</span><span style="letter-spacing:-0.60px">?</span><span style="letter-spacing:0.34px">)</span></span></div>
<div class="t" style="left:10px;top:430px;line-height:13px"><span style="font-size:11px;color:#ff0000"><span style="letter-spacing:0.02px">мати</span><span style="letter-spacing:0.00px"> </span><span style="letter-spacing:0.60px">-</span><span style="letter-spacing:0.00px"> </span><span style="letter-spacing:-0.65px">ЯКИМЕНКО</span><span style="letter-spacing:0.00px"> </span><span style="letter-spacing:-0.65px">Е</span><span style="letter-spacing:0.02px">вдокия</span><span style="letter-spacing:0.00px"> </span><span style="letter-spacing:-0.65px">И</span><span style="letter-spacing:0.02px">ванова</span><span style="letter-spacing:0.00px"> </span><span style="letter-spacing:0.34px">(</span><span style="letter-spacing:-0.05px">1772</span><span style="letter-spacing:0.60px">-</span><span style="letter-spacing:-0.05px">05</span><span style="letter-spacing:0.60px">.</span><span style="letter-spacing:-0.05px">12</span><span style="letter-spacing:0.60px">.</span><span style="letter-spacing:-0.05px">1849</span><span style="letter-spacing:0.34px">)</span></span></div>
<div class="t" style="left:2px;top:443px;line-height:13px"><span style="font-size:11px;font-weight:bold;-webkit-text-stroke:0.25px;color:#ff0000;text-decoration:underline;text-decoration-skip-ink:none"><span style="letter-spacing:1.00px">(</span><span style="letter-spacing:-0.12px">КОСТЫНА</span><span style="letter-spacing:1.00px">)</span><span style="letter-spacing:0.00px"> </span><span style="letter-spacing:-0.12px">Е</span><span style="letter-spacing:0.43px">катерина</span><span style="letter-spacing:0.00px"> </span><span style="letter-spacing:-0.12px">И</span><span style="letter-spacing:0.43px">ванова</span><span style="letter-spacing:0.00px"> </span><span style="letter-spacing:1.00px">(</span><span style="letter-spacing:1.22px">1809</span><span style="letter-spacing:0.60px">-</span><span style="letter-spacing:-0.72px">?</span><span style="letter-spacing:1.00px">)</span></span></div>
<div class="t" style="left:7px;top:456px;line-height:13px"><span style="font-size:11px;color:#0000ff"><span style="letter-spacing:0.02px">батько</span><span style="letter-spacing:0.00px"> </span><span style="letter-spacing:0.60px">-</span><span style="letter-spacing:0.00px"> </span><span style="letter-spacing:-0.65px">КОСТЫНА</span><span style="letter-spacing:0.00px"> </span><span style="letter-spacing:-0.65px">И</span><span style="letter-spacing:0.02px">ван</span><span style="letter-spacing:0.00px"> </span><span style="letter-spacing:-0.65px">Я</span><span style="letter-spacing:0.02px">ковлев</span><span style="letter-spacing:0.00px"> </span><span style="letter-spacing:0.34px">(</span><span style="letter-spacing:-0.05px">1790</span><span style="letter-spacing:0.60px">-</span><span style="letter-spacing:-0.05px">1831</span><span style="letter-spacing:0.34px">)</span></span></div>
<div class="t" style="left:7px;top:469px;line-height:13px"><span style="font-size:11px;color:#ff0000"><span style="letter-spacing:0.02px">мати</span><span style="letter-spacing:0.00px"> </span><span style="letter-spacing:0.60px">-</span><span style="letter-spacing:0.00px"> </span><span style="letter-spacing:-0.65px">КОСТЫНА</span><span style="letter-spacing:0.00px"> </span><span style="letter-spacing:-0.65px">М</span><span style="letter-spacing:0.02px">арфа</span><span style="letter-spacing:0.00px"> </span><span style="letter-spacing:0.34px">(</span><span style="letter-spacing:-0.05px">1792</span><span style="letter-spacing:0.60px">-</span><span style="letter-spacing:-0.60px">?</span><span style="letter-spacing:0.34px">)</span></span></div>
<div class="t" style="left:5px;top:482px;line-height:13px"><span style="font-size:11px;color:#ff0000"><span style="letter-spacing:0.60px">-</span><span style="letter-spacing:0.00px"> </span></span><span style="font-size:11px;font-weight:bold;-webkit-text-stroke:0.25px;color:#ff0000"><span style="letter-spacing:1.00px">(</span><span style="letter-spacing:-0.12px">КОСТЫНА</span><span style="letter-spacing:1.00px">)</span><span style="letter-spacing:0.00px"> </span><span style="letter-spacing:-0.12px">Е</span><span style="letter-spacing:0.43px">лена</span><span style="letter-spacing:0.00px"> </span><span style="letter-spacing:-0.12px">Ф</span><span style="letter-spacing:0.43px">едорова</span><span style="letter-spacing:0.00px"> </span><span style="letter-spacing:1.00px">(</span><span style="letter-spacing:1.22px">1809</span><span style="letter-spacing:0.60px">-</span><span style="letter-spacing:-0.72px">?</span><span style="letter-spacing:1.00px">)</span></span><span style="font-size:11px;color:#ff0000"><span style="letter-spacing:0.00px"> </span><span style="letter-spacing:0.34px">(</span><span style="letter-spacing:0.67px">0</span><span style="letter-spacing:0.72px">+</span><span style="letter-spacing:0.34px">(</span><span style="letter-spacing:-0.05px">10</span><span style="letter-spacing:1.06px">)</span><span style="letter-spacing:0.72px">+</span><span style="letter-spacing:0.67px">0</span><span style="letter-spacing:0.72px">+</span><span style="letter-spacing:0.67px">0</span><span style="letter-spacing:0.72px">+</span><span style="letter-spacing:0.67px">6</span><span style="letter-spacing:0.72px">+</span><span style="letter-spacing:0.67px">0</span><span style="letter-spacing:0.72px">=</span><span style="letter-spacing:-0.05px">16</span><span style="letter-spacing:0.94px">/</span><span style="letter-spacing:-0.05px">23</span><span style="letter-spacing:0.34px">)</span><span style="letter-spacing:0.72px"> +</span><span style="letter-spacing:0.00px"> </span><span style="letter-spacing:0.34px">(</span><span style="letter-spacing:0.67px">0</span><span style="letter-spacing:0.72px">+</span><span style="letter-spacing:0.67px">7</span><span style="letter-spacing:0.72px">+</span><span style="letter-spacing:0.67px">4</span><span style="letter-spacing:0.72px">+</span><span style="letter-spacing:0.67px">0</span><span style="letter-spacing:0.72px">=</span><span style="letter-spacing:-0.05px">11</span><span style="letter-spacing:0.94px">/</span><span style="letter-spacing:-0.05px">13</span><span style="letter-spacing:0.34px">)</span><span style="letter-spacing:0.72px"> +</span><span style="letter-spacing:0.00px"> </span><span style="letter-spacing:0.34px">((</span><span style="letter-spacing:-0.05px">2</span><span style="letter-spacing:1.06px">)</span><span style="letter-spacing:0.72px">+</span><span style="letter-spacing:0.67px">0</span><span style="letter-spacing:0.72px">+</span><span style="letter-spacing:0.67px">2</span><span style="letter-spacing:0.72px">+</span><span style="letter-spacing:0.67px">4</span><span style="letter-spacing:0.72px">+</span><span style="letter-spacing:0.67px">0</span><span style="letter-spacing:0.72px">=</span><span style="letter-spacing:-0.05px">8</span><span style="letter-spacing:0.94px">/</span><span style="letter-spacing:-0.05px">23</span><span style="letter-spacing:0.34px">)</span><span style="letter-spacing:0.72px"> =</span><span style="letter-spacing:0.00px"> </span><span style="letter-spacing:-0.05px">35</span><span style="letter-spacing:0.94px">/</span><span style="letter-spacing:-0.05px">59</span></span></div>
<div class="t" style="left:10px;top:495px;line-height:13px"><span style="font-size:11px;color:#0000ff"><span style="letter-spacing:0.02px">батько</span><span style="letter-spacing:0.00px"> </span><span style="letter-spacing:0.60px">-</span><span style="letter-spacing:0.00px"> </span><span style="letter-spacing:-0.65px">КОСТЫНА</span><span style="letter-spacing:0.00px"> </span><span style="letter-spacing:-0.65px">Ф</span><span style="letter-spacing:0.02px">едор</span><span style="letter-spacing:0.00px"> </span><span style="letter-spacing:-0.65px">Я</span><span style="letter-spacing:0.02px">ковлев</span><span style="letter-spacing:0.00px"> </span><span style="letter-spacing:0.34px">(</span><span style="letter-spacing:-0.05px">1792</span><span style="letter-spacing:0.60px">-</span><span style="letter-spacing:-0.05px">1836</span><span style="letter-spacing:0.60px">..</span><span style="letter-spacing:-0.05px">1838</span><span style="letter-spacing:0.34px">)</span></span></div>
<div class="t" style="left:10px;top:508px;line-height:13px"><span style="font-size:11px;color:#ff0000"><span style="letter-spacing:0.02px">мати</span><span style="letter-spacing:0.00px"> </span><span style="letter-spacing:0.60px">-</span><span style="letter-spacing:0.00px"> </span><span style="letter-spacing:-0.65px">КОСТЫНА</span><span style="letter-spacing:0.00px"> </span><span style="letter-spacing:-0.65px">Ф</span><span style="letter-spacing:0.02px">еодосия</span><span style="letter-spacing:0.00px"> </span><span style="letter-spacing:-0.65px">И</span><span style="letter-spacing:0.02px">ванова</span><span style="letter-spacing:0.00px"> </span><span style="letter-spacing:0.34px">(</span><span style="letter-spacing:-0.05px">1794</span><span style="letter-spacing:0.60px">-</span><span style="letter-spacing:-0.60px">?</span><span style="letter-spacing:0.34px">)</span></span></div>
<div class="t" style="left:5px;top:521px;line-height:13px"><span style="font-size:11px;color:#ff0000"><span style="letter-spacing:0.60px">-</span><span style="letter-spacing:0.00px"> </span></span><span style="font-size:11px;font-weight:bold;-webkit-text-stroke:0.25px;color:#ff0000"><span style="letter-spacing:-0.12px">ГОЛОВАТЕНКО</span><span style="letter-spacing:0.00px"> </span><span style="letter-spacing:1.00px">(</span><span style="letter-spacing:-0.12px">КОСТЫНА</span><span style="letter-spacing:1.00px">)</span><span style="letter-spacing:0.00px"> </span><span style="letter-spacing:-0.12px">К</span><span style="letter-spacing:0.43px">сения</span><span style="letter-spacing:0.00px"> </span><span style="letter-spacing:-0.12px">Ф</span><span style="letter-spacing:0.43px">едорова</span><span style="letter-spacing:0.00px"> </span><span style="letter-spacing:1.00px">(</span><span style="letter-spacing:1.22px">1811</span><span style="letter-spacing:0.30px">..</span><span style="letter-spacing:1.22px">1814</span><span style="letter-spacing:0.60px">-</span><span style="letter-spacing:-0.72px">?</span><span style="letter-spacing:1.00px">)</span></span><span style="font-size:11px;color:#ff0000"><span style="letter-spacing:0.00px"> </span><span style="letter-spacing:0.34px">(</span><span style="letter-spacing:0.67px">0</span><span style="letter-spacing:0.72px">+</span><span style="letter-spacing:0.34px">(</span><span style="letter-spacing:-0.05px">10</span><span style="letter-spacing:1.06px">)</span><span style="letter-spacing:0.72px">+</span><span style="letter-spacing:0.67px">0</span><span style="letter-spacing:0.72px">+</span><span style="letter-spacing:0.67px">0</span><span style="letter-spacing:0.72px">+</span><span style="letter-spacing:0.67px">4</span><span style="letter-spacing:0.72px">+</span><span style="letter-spacing:0.67px">0</span><span style="letter-spacing:0.72px">=</span><span style="letter-spacing:-0.05px">14</span><span style="letter-spacing:0.94px">/</span><span style="letter-spacing:-0.05px">23</span><span style="letter-spacing:0.34px">)</span><span style="letter-spacing:0.72px"> +</span><span style="letter-spacing:0.00px"> </span><span style="letter-spacing:0.34px">(</span><span style="letter-spacing:0.67px">0</span><span style="letter-spacing:0.72px">+</span><span style="letter-spacing:0.67px">7</span><span style="letter-spacing:0.72px">+</span><span style="letter-spacing:0.67px">4</span><span style="letter-spacing:0.72px">+</span><span style="letter-spacing:0.67px">0</span><span style="letter-spacing:0.72px">=</span><span style="letter-spacing:-0.05px">11</span><span style="letter-spacing:0.94px">/</span><span style="letter-spacing:-0.05px">13</span><span style="letter-spacing:0.34px">)</span><span style="letter-spacing:0.72px"> +</span><span style="letter-spacing:0.00px"> </span><span style="letter-spacing:0.34px">((</span><span style="letter-spacing:-0.05px">2</span><span style="letter-spacing:1.06px">)</span><span style="letter-spacing:0.72px">+</span><span style="letter-spacing:0.67px">0</span><span style="letter-spacing:0.72px">+</span><span style="letter-spacing:0.67px">0</span><span style="letter-spacing:0.72px">+</span><span style="letter-spacing:0.67px">3</span><span style="letter-spacing:0.72px">+</span><span style="letter-spacing:0.67px">0</span><span style="letter-spacing:0.72px">=</span><span style="letter-spacing:-0.05px">5</span><span style="letter-spacing:0.94px">/</span><span style="letter-spacing:-0.05px">23</span><span style="letter-spacing:0.34px">)</span></span></div>
<div class="t" style="left:10px;top:534px;line-height:13px"><span style="font-size:11px;color:#0000ff"><span style="letter-spacing:0.02px">батько</span><span style="letter-spacing:0.00px"> </span><span style="letter-spacing:0.60px">-</span><span style="letter-spacing:0.00px"> </span><span style="letter-spacing:-0.65px">КОСТЫНА</span><span style="letter-spacing:0.00px"> </span><span style="letter-spacing:-0.65px">Ф</span><span style="letter-spacing:0.02px">едор</span><span style="letter-spacing:0.00px"> </span><span style="letter-spacing:-0.65px">Я</span><span style="letter-spacing:0.02px">ковлев</span><span style="letter-spacing:0.00px"> </span><span style="letter-spacing:0.34px">(</span><span style="letter-spacing:-0.05px">1792</span><span style="letter-spacing:0.60px">-</span><span style="letter-spacing:-0.05px">1836</span><span style="letter-spacing:0.60px">..</span><span style="letter-spacing:-0.05px">1838</span><span style="letter-spacing:0.34px">)</span></span></div>
<div class="t" style="left:10px;top:547px;line-height:13px"><span style="font-size:11px;color:#ff0000"><span style="letter-spacing:0.02px">мати</span><span style="letter-spacing:0.00px"> </span><span style="letter-spacing:0.60px">-</span><span style="letter-spacing:0.00px"> </span><span style="letter-spacing:-0.65px">КОСТЫНА</span><span style="letter-spacing:0.00px"> </span><span style="letter-spacing:-0.65px">Ф</span><span style="letter-spacing:0.02px">еодосия</span><span style="letter-spacing:0.00px"> </span><span style="letter-spacing:-0.65px">И</span><span style="letter-spacing:0.02px">ванова</span><span style="letter-spacing:0.00px"> </span><span style="letter-spacing:0.34px">(</span><span style="letter-spacing:-0.05px">1794</span><span style="letter-spacing:0.60px">-</span><span style="letter-spacing:-0.60px">?</span><span style="letter-spacing:0.34px">)</span></span></div>
<div class="t" style="left:2px;top:560px;line-height:13px"><span style="font-size:11px;font-weight:bold;-webkit-text-stroke:0.25px;color:#0000ff;text-decoration:underline;text-decoration-skip-ink:none"><span style="letter-spacing:-0.12px">МИТЮН</span><span style="letter-spacing:0.00px"> </span><span style="letter-spacing:-0.12px">К</span><span style="letter-spacing:0.43px">осма</span><span style="letter-spacing:0.00px"> </span><span style="letter-spacing:-0.12px">А</span><span style="letter-spacing:0.43px">враамов</span><span style="letter-spacing:0.00px"> </span><span style="letter-spacing:1.00px">(</span><span style="letter-spacing:1.22px">1766</span><span style="letter-spacing:0.60px">-</span><span style="letter-spacing:1.22px">1823</span><span style="letter-spacing:1.00px">)</span></span></div>
<div class="t" style="left:7px;top:573px;line-height:13px"><span style="font-size:11px;color:#0000ff"><span style="letter-spacing:0.02px">батько</span><span style="letter-spacing:0.00px"> </span><span style="letter-spacing:0.60px">-</span><span style="letter-spacing:0.00px"> </span><span style="letter-spacing:-0.65px">МЕТЮН</span><span style="letter-spacing:0.00px"> </span><span style="letter-spacing:-0.65px">А</span><span style="letter-spacing:0.02px">враам</span><span style="letter-spacing:0.00px"> </span><span style="letter-spacing:-0.65px">О</span><span style="letter-spacing:0.02px">нисиев</span><span style="letter-spacing:-0.60px">?</span><span style="letter-spacing:0.00px"> </span><span style="letter-spacing:0.34px">(</span><span style="letter-spacing:-0.05px">1743</span><span style="letter-spacing:0.60px">-</span><span style="letter-spacing:-0.60px">?</span><span style="letter-spacing:0.34px">)</span></span></div>
<div class="t" style="left:7px;top:586px;line-height:13px"><span style="font-size:11px;color:#ff0000"><span style="letter-spacing:0.02px">мати</span><span style="letter-spacing:0.00px"> </span><span style="letter-spacing:0.60px">-</span><span style="letter-spacing:0.00px"> </span><span style="letter-spacing:-0.65px">МЕТЮН</span><span style="letter-spacing:0.00px"> </span><span style="letter-spacing:-0.65px">А</span><span style="letter-spacing:0.02px">гафья</span><span style="letter-spacing:0.00px"> </span><span style="letter-spacing:-0.65px">П</span><span style="letter-spacing:0.02px">етрова</span><span style="letter-spacing:0.00px"> </span><span style="letter-spacing:0.34px">(</span><span style="letter-spacing:-0.05px">1745</span><span style="letter-spacing:0.60px">-</span><span style="letter-spacing:-0.60px">?</span><span style="letter-spacing:0.34px">)</span></span></div>
<div class="t" style="left:5px;top:599px;line-height:13px"><span style="font-size:11px;color:#0000ff"><span style="letter-spacing:0.60px">-</span><span style="letter-spacing:0.00px"> </span></span><span style="font-size:11px;font-weight:bold;-webkit-text-stroke:0.25px;color:#0000ff"><span style="letter-spacing:-0.12px">МЕТЮН</span><span style="letter-spacing:0.00px"> </span><span style="letter-spacing:-0.12px">К</span><span style="letter-spacing:0.43px">узьма</span><span style="letter-spacing:0.00px"> </span><span style="letter-spacing:-0.12px">Ф</span><span style="letter-spacing:0.43px">едоров</span><span style="letter-spacing:0.00px"> </span><span style="letter-spacing:1.00px">(</span><span style="letter-spacing:1.22px">1772</span><span style="letter-spacing:0.60px">-</span><span style="letter-spacing:-0.72px">?</span><span style="letter-spacing:1.00px">)</span></span><span style="font-size:11px;color:#0000ff"><span style="letter-spacing:0.00px"> </span><span style="letter-spacing:0.34px">(</span><span style="letter-spacing:0.67px">8</span><span style="letter-spacing:0.72px">+</span><span style="letter-spacing:0.67px">0</span><span style="letter-spacing:0.72px">+</span><span style="letter-spacing:0.67px">0</span><span style="letter-spacing:0.72px">+</span><span style="letter-spacing:0.67px">2</span><span style="letter-spacing:0.72px">+</span><span style="letter-spacing:0.67px">0</span><span style="letter-spacing:0.72px">=</span><span style="letter-spacing:-0.05px">10</span><span style="letter-spacing:0.94px">/</span><span style="letter-spacing:-0.05px">23</span><span style="letter-spacing:0.34px">)</span><span style="letter-spacing:0.72px"> +</span><span style="letter-spacing:0.00px"> </span><span style="letter-spacing:0.34px">(</span><span style="letter-spacing:0.67px">0</span><span style="letter-spacing:0.72px">+</span><span style="letter-spacing:0.67px">7</span><span style="letter-spacing:0.72px">+</span><span style="letter-spacing:0.67px">3</span><span style="letter-spacing:0.72px">+</span><span style="letter-spacing:0.67px">0</span><span style="letter-spacing:0.72px">=</span><span style="letter-spacing:-0.05px">10</span><span style="letter-spacing:0.94px">/</span><span style="letter-spacing:-0.05px">13</span><span style="letter-spacing:0.34px">)</span><span style="letter-spacing:0.72px"> +</span><span style="letter-spacing:0.00px"> </span><span style="letter-spacing:0.34px">((</span><span style="letter-spacing:-0.05px">2</span><span style="letter-spacing:1.06px">)</span><span style="letter-spacing:0.72px">+</span><span style="letter-spacing:0.67px">0</span><span style="letter-spacing:0.72px">+</span><span style="letter-spacing:0.67px">7</span><span style="letter-spacing:0.72px">+</span><span style="letter-spacing:0.67px">5</span><span style="letter-spacing:0.72px">+</span><span style="letter-spacing:0.67px">0</span><span style="letter-spacing:0.72px">=</span><span style="letter-spacing:-0.05px">14</span><span style="letter-spacing:0.94px">/</span><span style="letter-spacing:-0.05px">23</span><span style="letter-spacing:0.34px">)</span><span style="letter-spacing:0.72px"> =</span><span style="letter-spacing:0.00px"> </span><span style="letter-spacing:-0.05px">35</span><span style="letter-spacing:0.94px">/</span><span style="letter-spacing:-0.05px">59</span><span style="letter-spacing:0.72px"> =</span><span style="letter-spacing:0.00px"> </span><span style="letter-spacing:-0.05px">59</span><span style="letter-spacing:0.02px">%</span></span></div>
<div class="t" style="left:10px;top:612px;line-height:13px"><span style="font-size:11px;color:#0000ff"><span style="letter-spacing:0.02px">батько</span><span style="letter-spacing:0.00px"> </span><span style="letter-spacing:0.60px">-</span><span style="letter-spacing:0.00px"> </span><span style="letter-spacing:-0.65px">МЕТЮН</span><span style="letter-spacing:0.00px"> </span><span style="letter-spacing:-0.65px">Ф</span><span style="letter-spacing:0.02px">едор</span><span style="letter-spacing:0.00px"> </span><span style="letter-spacing:-0.65px">С</span><span style="letter-spacing:0.02px">еменов</span><span style="letter-spacing:-0.60px">?</span><span style="letter-spacing:0.00px"> </span><span style="letter-spacing:0.34px">(</span><span style="letter-spacing:-0.05px">1747</span><span style="letter-spacing:0.60px">-</span><span style="letter-spacing:-0.60px">?</span><span style="letter-spacing:0.34px">)</span></span></div>
</div>
<div style="left:1116px;top:171px;width:17px;height:619px;background:#f0f0f0"></div>
<div style="left:1116px;top:259px;width:15px;height:95px;background:#cdcdcd"></div>
<svg style="position:absolute;left:1120px;top:178px" width="9" height="6" viewBox="0 0 9 6"><path d="M0.5 5L4.5 1L8.5 5" fill="none" stroke="#505050" stroke-width="2"/></svg>
<svg style="position:absolute;left:1120px;top:778px" width="9" height="6" viewBox="0 0 9 6"><path d="M0.5 1L4.5 5L8.5 1" fill="none" stroke="#505050" stroke-width="2"/></svg>
<div style="left:512px;top:790px;width:621px;height:16px;background:#f0f0f0"></div>
<div style="left:530px;top:791px;width:422px;height:15px;background:#cdcdcd"></div>
<svg style="position:absolute;left:518px;top:793px" width="6" height="9" viewBox="0 0 6 9"><path d="M5 0.5L1 4.5L5 8.5" fill="none" stroke="#505050" stroke-width="2"/></svg>
<svg style="position:absolute;left:1104px;top:793px" width="6" height="9" viewBox="0 0 6 9"><path d="M1 0.5L5 4.5L1 8.5" fill="none" stroke="#505050" stroke-width="2"/></svg>
<div style="left:1134px;top:167px;width:183px;height:644px;background:#f0f0f0"></div>
<div style="left:1133px;top:170px;width:1px;height:638px;background:#a0a0a8"></div>
<div style="left:1135px;top:177px;width:178px;height:333px;border:1px solid #dcdcdc;box-sizing:border-box"></div>
<div style="left:1141px;top:172px;width:150px;height:10px;background:#f0f0f0"></div>
<div class="t" style="left:1142px;top:170px;line-height:13px;font-size:11px;color:#000;letter-spacing:0.05px">Данні для звірки та їх &quot;вага&quot;</div>
<div style="left:1140px;top:192px;width:13px;height:13px;background:#fff;border:1px solid #333;box-sizing:border-box"></div>
<svg style="position:absolute;left:1140px;top:192px" width="13" height="13" viewBox="0 0 13 13"><path d="M2.3 6.3L5 9.2L10.8 3.3" fill="none" stroke="#404040" stroke-width="1.5"/></svg>
<div class="t" style="left:1156px;top:193px;line-height:13px;font-size:11px;color:#000;">Прізвище у чоловіків</div>
<div style="left:1269px;top:186px;width:40px;height:22px;background:#fff;border:1px solid #7a7a7a;box-sizing:border-box"></div>
<div class="t" style="left:1273px;top:190px;line-height:13px;font-size:11px;color:#000">10</div>
<div style="left:1292px;top:189px;width:13px;height:6px;background:#e1e1e1;border:1px solid #b4b4b4;box-sizing:border-box"></div>
<div style="left:1292px;top:196px;width:13px;height:8px;background:#e1e1e1;border:1px solid #b4b4b4;box-sizing:border-box"></div>
<svg style="position:absolute;left:1295px;top:190px" width="8" height="14" viewBox="0 0 8 14"><path d="M0 4L3.5 0.5L7 4Z M0 8.5L3.5 12.5L7 8.5Z" fill="#000"/></svg>
<div style="left:1140px;top:214px;width:13px;height:13px;background:#fff;border:1px solid #333;box-sizing:border-box"></div>
<div class="t" style="left:1156px;top:215px;line-height:13px;font-size:11px;color:#000;">Прізвище у жінок</div>
<div style="left:1269px;top:208px;width:40px;height:22px;background:#fff;border:1px solid #7a7a7a;box-sizing:border-box"></div>
<div class="t" style="left:1273px;top:212px;line-height:13px;font-size:11px;color:#000">5</div>
<div style="left:1292px;top:211px;width:13px;height:6px;background:#e1e1e1;border:1px solid #b4b4b4;box-sizing:border-box"></div>
<div style="left:1292px;top:218px;width:13px;height:8px;background:#e1e1e1;border:1px solid #b4b4b4;box-sizing:border-box"></div>
<svg style="position:absolute;left:1295px;top:212px" width="8" height="14" viewBox="0 0 8 14"><path d="M0 4L3.5 0.5L7 4Z M0 8.5L3.5 12.5L7 8.5Z" fill="#000"/></svg>
<div style="left:1140px;top:236px;width:13px;height:13px;background:#fff;border:1px solid #333;box-sizing:border-box"></div>
<svg style="position:absolute;left:1140px;top:236px" width="13" height="13" viewBox="0 0 13 13"><path d="M2.3 6.3L5 9.2L10.8 3.3" fill="none" stroke="#404040" stroke-width="1.5"/></svg>
<div class="t" style="left:1156px;top:237px;line-height:13px;font-size:11px;color:#000;">(Дівоче прізвище)</div>
<div style="left:1269px;top:230px;width:40px;height:22px;background:#fff;border:1px solid #7a7a7a;box-sizing:border-box"></div>
<div class="t" style="left:1273px;top:234px;line-height:13px;font-size:11px;color:#000">10</div>
<div style="left:1292px;top:233px;width:13px;height:6px;background:#e1e1e1;border:1px solid #b4b4b4;box-sizing:border-box"></div>
<div style="left:1292px;top:240px;width:13px;height:8px;background:#e1e1e1;border:1px solid #b4b4b4;box-sizing:border-box"></div>
<svg style="position:absolute;left:1295px;top:234px" width="8" height="14" viewBox="0 0 8 14"><path d="M0 4L3.5 0.5L7 4Z M0 8.5L3.5 12.5L7 8.5Z" fill="#000"/></svg>
<div style="left:1140px;top:258px;width:13px;height:13px;background:#fff;border:1px solid #333;box-sizing:border-box"></div>
<div class="t" style="left:1156px;top:259px;line-height:13px;font-size:11px;color:#000;">Ім&#x27;я</div>
<div style="left:1269px;top:252px;width:40px;height:22px;background:#fff;border:1px solid #7a7a7a;box-sizing:border-box"></div>
<div class="t" style="left:1273px;top:256px;line-height:13px;font-size:11px;color:#000">10</div>
<div style="left:1292px;top:255px;width:13px;height:6px;background:#e1e1e1;border:1px solid #b4b4b4;box-sizing:border-box"></div>
<div style="left:1292px;top:262px;width:13px;height:8px;background:#e1e1e1;border:1px solid #b4b4b4;box-sizing:border-box"></div>
<svg style="position:absolute;left:1295px;top:256px" width="8" height="14" viewBox="0 0 8 14"><path d="M0 4L3.5 0.5L7 4Z M0 8.5L3.5 12.5L7 8.5Z" fill="#000"/></svg>
<div style="left:1140px;top:280px;width:13px;height:13px;background:#fff;border:1px solid #333;box-sizing:border-box"></div>
<svg style="position:absolute;left:1140px;top:280px" width="13" height="13" viewBox="0 0 13 13"><path d="M2.3 6.3L5 9.2L10.8 3.3" fill="none" stroke="#404040" stroke-width="1.5"/></svg>
<div class="t" style="left:1156px;top:281px;line-height:13px;font-size:11px;color:#000;">По батькові</div>
<div style="left:1269px;top:274px;width:40px;height:22px;background:#fff;border:1px solid #7a7a7a;box-sizing:border-box"></div>
<div class="t" style="left:1273px;top:278px;line-height:13px;font-size:11px;color:#000">7</div>
<div style="left:1292px;top:277px;width:13px;height:6px;background:#e1e1e1;border:1px solid #b4b4b4;box-sizing:border-box"></div>
<div style="left:1292px;top:284px;width:13px;height:8px;background:#e1e1e1;border:1px solid #b4b4b4;box-sizing:border-box"></div>
<svg style="position:absolute;left:1295px;top:278px" width="8" height="14" viewBox="0 0 8 14"><path d="M0 4L3.5 0.5L7 4Z M0 8.5L3.5 12.5L7 8.5Z" fill="#000"/></svg>
<div style="left:1140px;top:302px;width:13px;height:13px;background:#fff;border:1px solid #333;box-sizing:border-box"></div>
<svg style="position:absolute;left:1140px;top:302px" width="13" height="13" viewBox="0 0 13 13"><path d="M2.3 6.3L5 9.2L10.8 3.3" fill="none" stroke="#404040" stroke-width="1.5"/></svg>
<div class="t" style="left:1156px;top:303px;line-height:13px;font-size:11px;color:#000;">Дата народження</div>
<div style="left:1269px;top:296px;width:40px;height:22px;background:#fff;border:1px solid #7a7a7a;box-sizing:border-box"></div>
<div class="t" style="left:1273px;top:300px;line-height:13px;font-size:11px;color:#000">6</div>
<div style="left:1292px;top:299px;width:13px;height:6px;background:#e1e1e1;border:1px solid #b4b4b4;box-sizing:border-box"></div>
<div style="left:1292px;top:306px;width:13px;height:8px;background:#e1e1e1;border:1px solid #b4b4b4;box-sizing:border-box"></div>
<svg style="position:absolute;left:1295px;top:300px" width="8" height="14" viewBox="0 0 8 14"><path d="M0 4L3.5 0.5L7 4Z M0 8.5L3.5 12.5L7 8.5Z" fill="#000"/></svg>
<div style="left:1140px;top:324px;width:13px;height:13px;background:#fff;border:1px solid #333;box-sizing:border-box"></div>
<div class="t" style="left:1156px;top:325px;line-height:13px;font-size:11px;color:#000;">Дата смерті</div>
<div style="left:1269px;top:318px;width:40px;height:22px;background:#fff;border:1px solid #7a7a7a;box-sizing:border-box"></div>
<div class="t" style="left:1273px;top:322px;line-height:13px;font-size:11px;color:#000">5</div>
<div style="left:1292px;top:321px;width:13px;height:6px;background:#e1e1e1;border:1px solid #b4b4b4;box-sizing:border-box"></div>
<div style="left:1292px;top:328px;width:13px;height:8px;background:#e1e1e1;border:1px solid #b4b4b4;box-sizing:border-box"></div>
<svg style="position:absolute;left:1295px;top:322px" width="8" height="14" viewBox="0 0 8 14"><path d="M0 4L3.5 0.5L7 4Z M0 8.5L3.5 12.5L7 8.5Z" fill="#000"/></svg>
<div style="left:1134px;top:342px;width:179px;height:1px;background:#a0a0a0"></div>
<div style="left:1134px;top:343px;width:179px;height:1px;background:#fff"></div>
<div style="left:1140px;top:348px;width:13px;height:13px;background:#fff;border:1px solid #333;box-sizing:border-box"></div>
<svg style="position:absolute;left:1140px;top:348px" width="13" height="13" viewBox="0 0 13 13"><path d="M2.3 6.3L5 9.2L10.8 3.3" fill="none" stroke="#404040" stroke-width="1.5"/></svg>
<div class="t" style="left:1156px;top:349px;line-height:13px;font-size:11px;color:#000;">Батько</div>
<div style="left:1140px;top:367px;width:13px;height:13px;background:#fff;border:1px solid #333;box-sizing:border-box"></div>
<svg style="position:absolute;left:1140px;top:367px" width="13" height="13" viewBox="0 0 13 13"><path d="M2.3 6.3L5 9.2L10.8 3.3" fill="none" stroke="#404040" stroke-width="1.5"/></svg>
<div class="t" style="left:1156px;top:368px;line-height:13px;font-size:11px;color:#000;">Мати</div>
<div style="left:1135px;top:517px;width:178px;height:178px;border:1px solid #dcdcdc;box-sizing:border-box"></div>
<div style="left:1141px;top:513px;width:56px;height:8px;background:#f0f0f0"></div>
<div class="t" style="left:1142px;top:512px;line-height:13px;font-size:11px;color:#000;">Зміст звіту</div>
<svg style="position:absolute;left:1140px;top:539px" width="13" height="13" viewBox="0 0 13 13"><circle cx="6.5" cy="6.5" r="5.8" fill="#fff" stroke="#333" stroke-width="1"/></svg>
<div class="t" style="left:1156px;top:540px;line-height:13px;font-size:11px;color:#000;">Тільки поточна персона</div>
<svg style="position:absolute;left:1140px;top:557px" width="13" height="13" viewBox="0 0 13 13"><circle cx="6.5" cy="6.5" r="5.8" fill="#fff" stroke="#333" stroke-width="1"/></svg>
<div class="t" style="left:1156px;top:558px;line-height:13px;font-size:11px;color:#000;">Включати чоловіків</div>
<svg style="position:absolute;left:1140px;top:575px" width="13" height="13" viewBox="0 0 13 13"><circle cx="6.5" cy="6.5" r="5.8" fill="#fff" stroke="#333" stroke-width="1"/></svg>
<div class="t" style="left:1156px;top:576px;line-height:13px;font-size:11px;color:#000;">Включати жінок</div>
<svg style="position:absolute;left:1140px;top:593px" width="13" height="13" viewBox="0 0 13 13"><circle cx="6.5" cy="6.5" r="5.8" fill="#fff" stroke="#333" stroke-width="1"/><circle cx="6.5" cy="6.5" r="3.2" fill="#333"/></svg>
<div class="t" style="left:1156px;top:594px;line-height:13px;font-size:11px;color:#000;">Включати всіх</div>
<div style="left:1140px;top:630px;width:13px;height:13px;background:#fff;border:1px solid #333;box-sizing:border-box"></div>
<svg style="position:absolute;left:1140px;top:630px" width="13" height="13" viewBox="0 0 13 13"><path d="M2.3 6.3L5 9.2L10.8 3.3" fill="none" stroke="#404040" stroke-width="1.5"/></svg>
<div class="t" style="left:1156px;top:631px;line-height:13px;font-size:11px;color:#000;">Деталізувати розрахунок</div>
<div style="left:1140px;top:650px;width:13px;height:13px;background:#fff;border:1px solid #333;box-sizing:border-box"></div>
<svg style="position:absolute;left:1140px;top:650px" width="13" height="13" viewBox="0 0 13 13"><path d="M2.3 6.3L5 9.2L10.8 3.3" fill="none" stroke="#404040" stroke-width="1.5"/></svg>
<div class="t" style="left:1156px;top:651px;line-height:13px;font-size:11px;color:#000;">Виключати братів/сестер</div>
<div class="t" style="left:1140px;top:674px;line-height:13px;font-size:11px;color:#000;">Показувати з % вище</div>
<div style="left:1269px;top:668px;width:40px;height:22px;background:#fff;border:1px solid #0078d7;box-sizing:border-box"></div>
<div class="t" style="left:1273px;top:672px;line-height:13px;font-size:11px;color:#000">20</div>
<div style="left:1292px;top:671px;width:13px;height:6px;background:#e1e1e1;border:1px solid #b4b4b4;box-sizing:border-box"></div>
<div style="left:1292px;top:678px;width:13px;height:8px;background:#e1e1e1;border:1px solid #b4b4b4;box-sizing:border-box"></div>
<svg style="position:absolute;left:1295px;top:672px" width="8" height="14" viewBox="0 0 8 14"><path d="M0 4L3.5 0.5L7 4Z M0 8.5L3.5 12.5L7 8.5Z" fill="#000"/></svg>
<div style="left:1273px;top:672px;width:1px;height:13px;background:#000"></div>
<div style="left:1135px;top:702px;width:178px;height:52px;border:1px solid #dcdcdc;box-sizing:border-box"></div>
<div style="left:1141px;top:698px;width:72px;height:8px;background:#f0f0f0"></div>
<div class="t" style="left:1142px;top:697px;line-height:13px;font-size:11px;color:#000;">Разновид ПІБ</div>
<svg style="position:absolute;left:1142px;top:714px" width="13" height="13" viewBox="0 0 13 13"><circle cx="6.5" cy="6.5" r="5.8" fill="#fff" stroke="#333" stroke-width="1"/></svg>
<div class="t" style="left:1158px;top:715px;line-height:13px;font-size:11px;color:#000;">Точнее порівняння</div>
<svg style="position:absolute;left:1142px;top:734px" width="13" height="13" viewBox="0 0 13 13"><circle cx="6.5" cy="6.5" r="5.8" fill="#fff" stroke="#333" stroke-width="1"/><circle cx="6.5" cy="6.5" r="3.2" fill="#333"/></svg>
<div class="t" style="left:1158px;top:735px;line-height:13px;font-size:11px;color:#000;">Враховуючи &quot;схожість&quot;</div>
<div style="left:1134px;top:754px;width:178px;height:53px;border:1px solid #a0a0a0;box-sizing:border-box;box-shadow:inset 1px 1px 0 #fff"></div>
<div style="left:1138px;top:782px;width:55px;height:20px;background:#e1e1e1;border:1px solid #adadad;box-sizing:border-box"></div>
<div class="t" style="left:1138px;top:786px;width:55px;text-align:center;line-height:14px;font-size:11px;color:#000;white-space:nowrap;overflow:hidden">Створити</div>
<div style="left:1196px;top:782px;width:55px;height:20px;background:#e1e1e1;border:1px solid #adadad;box-sizing:border-box"></div>
<div class="t" style="left:1196px;top:786px;width:55px;text-align:center;line-height:14px;font-size:11px;color:#000;white-space:nowrap;overflow:hidden">Друкувати</div>
<div style="left:1254px;top:782px;width:55px;height:20px;background:#e1e1e1;border:1px solid #adadad;box-sizing:border-box"></div>
<div class="t" style="left:1254px;top:786px;width:55px;text-align:center;line-height:14px;font-size:11px;color:#000;white-space:nowrap;overflow:hidden">Записати</div>
<div style="left:0px;top:0px;width:1321px;height:1px;background:#5a5a5a"></div>
<div style="left:0px;top:0px;width:1px;height:816px;background:#5a5a5a"></div>
<div style="left:1320px;top:0px;width:1px;height:816px;background:#5a5a5a"></div>
<div style="left:1px;top:66px;width:1px;height:747px;background:#f0f0f0"></div>
<div style="left:1319px;top:66px;width:1px;height:747px;background:#f0f0f0"></div>
<div style="left:1px;top:813px;width:1319px;height:1px;background:#fff"></div>
<div style="left:0px;top:814px;width:1321px;height:2px;background:#606060"></div></body></html>
